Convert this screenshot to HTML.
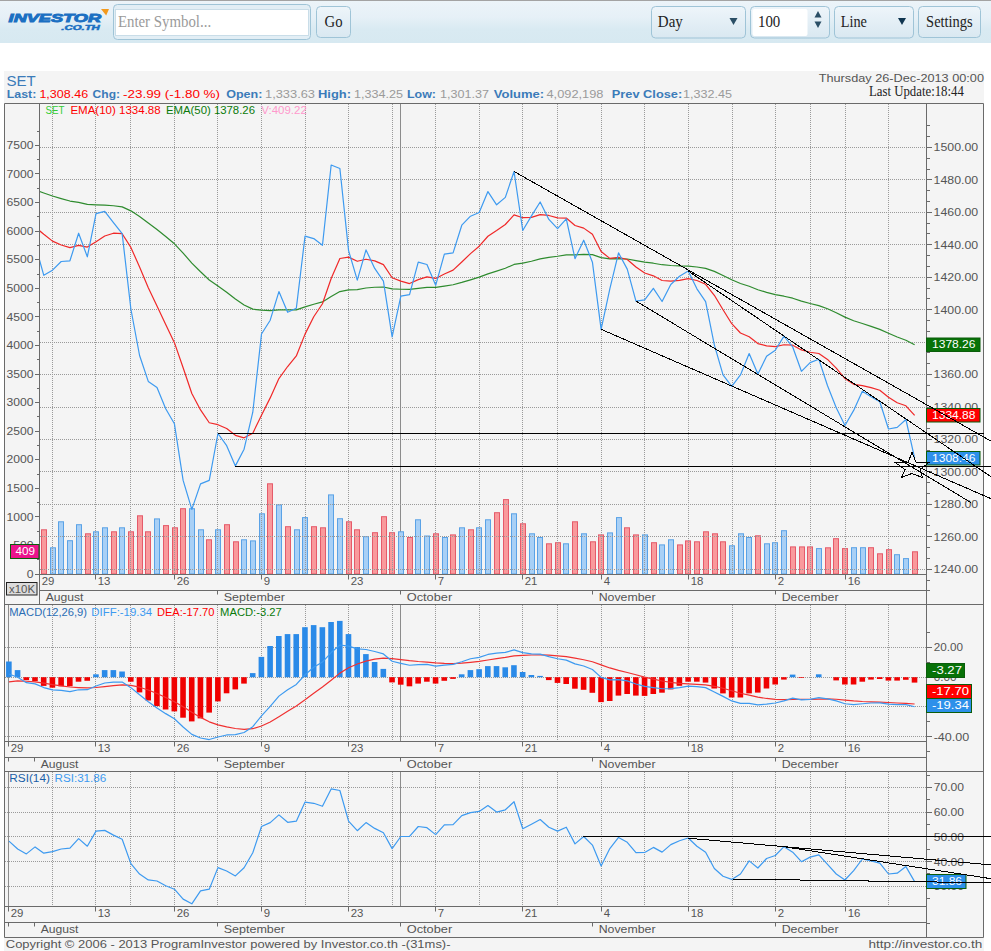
<!DOCTYPE html>
<html><head><meta charset="utf-8"><title>SET Chart</title>
<style>html,body{margin:0;padding:0;background:#fff;overflow:hidden}svg{display:block}</style></head>
<body><svg xmlns="http://www.w3.org/2000/svg" width="991" height="951" viewBox="0 0 991 951" shape-rendering="auto">
<defs><linearGradient id="hdr" x1="0" y1="0" x2="0" y2="1"><stop offset="0" stop-color="#ecf4f9"/><stop offset="0.4" stop-color="#e6f0f7"/><stop offset="0.68" stop-color="#d9eaf2"/><stop offset="1" stop-color="#d7e9f1"/></linearGradient><linearGradient id="btn" x1="0" y1="0" x2="0" y2="1"><stop offset="0" stop-color="#eef5fa"/><stop offset="1" stop-color="#d9e8f1"/></linearGradient><clipPath id="cMain"><rect x="40" y="104" width="886" height="470"/></clipPath><clipPath id="cMacd"><rect x="5" y="605" width="921" height="136"/></clipPath><clipPath id="cRsi"><rect x="5" y="772" width="921" height="134"/></clipPath></defs>
<rect x="0" y="0" width="991" height="43" fill="url(#hdr)" stroke="none" stroke-width="1"/>
<rect x="0" y="0" width="991" height="1" fill="#a3a3a3" stroke="none" stroke-width="1"/>
<text x="8.6" y="21.6" font-size="11.8" fill="#1b6fc2" font-weight="bold" font-family='"Liberation Sans", sans-serif' text-anchor="start" textLength="92.5" lengthAdjust="spacingAndGlyphs" font-style="italic" stroke="#1b6fc2" stroke-width="0.9">INVESTOR</text>
<text x="61.3" y="30" font-size="7.4" fill="#1b6fc2" font-weight="bold" font-family='"Liberation Sans", sans-serif' text-anchor="start" textLength="38.5" lengthAdjust="spacingAndGlyphs" font-style="italic" stroke="#1b6fc2" stroke-width="0.5">.CO.TH</text>
<polygon points="101,8.9 109,8.9 106.2,15.5" fill="#f39a1e"/>
<rect x="113.5" y="4.5" width="197" height="35" fill="#e2eef5" stroke="#9fc4d7" stroke-width="1" rx="4"/>
<rect x="115.5" y="9.5" width="193" height="26" fill="#ffffff" stroke="#c9dde8" stroke-width="1"/>
<text x="117.9" y="26.9" font-size="16" fill="#9a9a9a" font-weight="normal" font-family='"Liberation Serif", serif' text-anchor="start" textLength="93.2" lengthAdjust="spacingAndGlyphs">Enter Symbol...</text>
<rect x="316.5" y="6.5" width="34" height="31" fill="url(#btn)" stroke="#9fc4d7" stroke-width="1" rx="4"/>
<text x="324.6" y="26.9" font-size="16.5" fill="#222" font-weight="normal" font-family='"Liberation Serif", serif' text-anchor="start" textLength="18" lengthAdjust="spacingAndGlyphs">Go</text>
<rect x="651.5" y="6.5" width="94" height="31.5" fill="url(#btn)" stroke="#9fc4d7" stroke-width="1" rx="4"/>
<text x="657.8" y="27.2" font-size="16.5" fill="#222" font-weight="normal" font-family='"Liberation Serif", serif' text-anchor="start" textLength="25" lengthAdjust="spacingAndGlyphs">Day</text>
<polygon points="729.5,18 737.5,18 733.5,25" fill="#2b4f66"/>
<rect x="750.5" y="6.5" width="79" height="31.5" fill="url(#btn)" stroke="#9fc4d7" stroke-width="1" rx="4"/>
<rect x="752.5" y="9" width="55" height="27" fill="#ffffff" stroke="none" stroke-width="1" rx="2"/>
<text x="758" y="27.2" font-size="16.5" fill="#222" font-weight="normal" font-family='"Liberation Serif", serif' text-anchor="start" textLength="22.3" lengthAdjust="spacingAndGlyphs">100</text>
<polygon points="814.5,17.5 821.5,17.5 818,11" fill="#2b4f66"/>
<polygon points="814.5,21.5 821.5,21.5 818,28" fill="#2b4f66"/>
<rect x="834.5" y="6.5" width="79" height="31.5" fill="url(#btn)" stroke="#9fc4d7" stroke-width="1" rx="4"/>
<text x="840.7" y="27" font-size="16.5" fill="#222" font-weight="normal" font-family='"Liberation Serif", serif' text-anchor="start" textLength="26.2" lengthAdjust="spacingAndGlyphs">Line</text>
<polygon points="898,18 906,18 902,25" fill="#0f3550"/>
<rect x="918.5" y="6.5" width="62" height="31" fill="url(#btn)" stroke="#9fc4d7" stroke-width="1" rx="4"/>
<text x="926.1" y="27" font-size="16.5" fill="#222" font-weight="normal" font-family='"Liberation Serif", serif' text-anchor="start" textLength="46.6" lengthAdjust="spacingAndGlyphs">Settings</text>
<rect x="4" y="71" width="980" height="880" fill="#f4f4f4" stroke="none" stroke-width="1"/>
<text x="6.5" y="86.3" font-size="15" fill="#3b7bb9" font-weight="normal" font-family='"Liberation Sans", sans-serif' text-anchor="start" textLength="29.3" lengthAdjust="spacingAndGlyphs">SET</text>
<text x="6.7" y="97.9" font-size="11.2" fill="#3b7bb9" font-weight="bold" font-family='"Liberation Sans", sans-serif' text-anchor="start" textLength="29.6" lengthAdjust="spacingAndGlyphs">Last:</text>
<text x="39.4" y="97.9" font-size="11.2" fill="#ff0000" font-weight="normal" font-family='"Liberation Sans", sans-serif' text-anchor="start" textLength="48.8" lengthAdjust="spacingAndGlyphs">1,308.46</text>
<text x="92.6" y="97.9" font-size="11.2" fill="#3b7bb9" font-weight="bold" font-family='"Liberation Sans", sans-serif' text-anchor="start" textLength="27.4" lengthAdjust="spacingAndGlyphs">Chg:</text>
<text x="123" y="97.9" font-size="11.2" fill="#ff0000" font-weight="normal" font-family='"Liberation Sans", sans-serif' text-anchor="start" textLength="97" lengthAdjust="spacingAndGlyphs">-23.99 (-1.80 %)</text>
<text x="226.2" y="97.9" font-size="11.2" fill="#3b7bb9" font-weight="bold" font-family='"Liberation Sans", sans-serif' text-anchor="start" textLength="36.2" lengthAdjust="spacingAndGlyphs">Open:</text>
<text x="265" y="97.9" font-size="11.2" fill="#9a9a9a" font-weight="normal" font-family='"Liberation Sans", sans-serif' text-anchor="start" textLength="50" lengthAdjust="spacingAndGlyphs">1,333.63</text>
<text x="318" y="97.9" font-size="11.2" fill="#3b7bb9" font-weight="bold" font-family='"Liberation Sans", sans-serif' text-anchor="start" textLength="33" lengthAdjust="spacingAndGlyphs">High:</text>
<text x="354" y="97.9" font-size="11.2" fill="#9a9a9a" font-weight="normal" font-family='"Liberation Sans", sans-serif' text-anchor="start" textLength="49" lengthAdjust="spacingAndGlyphs">1,334.25</text>
<text x="407" y="97.9" font-size="11.2" fill="#3b7bb9" font-weight="bold" font-family='"Liberation Sans", sans-serif' text-anchor="start" textLength="29" lengthAdjust="spacingAndGlyphs">Low:</text>
<text x="440" y="97.9" font-size="11.2" fill="#9a9a9a" font-weight="normal" font-family='"Liberation Sans", sans-serif' text-anchor="start" textLength="49" lengthAdjust="spacingAndGlyphs">1,301.37</text>
<text x="493.8" y="97.9" font-size="11.2" fill="#3b7bb9" font-weight="bold" font-family='"Liberation Sans", sans-serif' text-anchor="start" textLength="50.4" lengthAdjust="spacingAndGlyphs">Volume:</text>
<text x="546.5" y="97.9" font-size="11.2" fill="#9a9a9a" font-weight="normal" font-family='"Liberation Sans", sans-serif' text-anchor="start" textLength="57" lengthAdjust="spacingAndGlyphs">4,092,198</text>
<text x="611.8" y="97.9" font-size="11.2" fill="#3b7bb9" font-weight="bold" font-family='"Liberation Sans", sans-serif' text-anchor="start" textLength="70.4" lengthAdjust="spacingAndGlyphs">Prev Close:</text>
<text x="683" y="97.9" font-size="11.2" fill="#9a9a9a" font-weight="normal" font-family='"Liberation Sans", sans-serif' text-anchor="start" textLength="49" lengthAdjust="spacingAndGlyphs">1,332.45</text>
<text x="818.7" y="82.3" font-size="11.4" fill="#555" font-weight="normal" font-family='"Liberation Sans", sans-serif' text-anchor="start" textLength="165.3" lengthAdjust="spacingAndGlyphs">Thursday 26-Dec-2013 00:00</text>
<text x="869" y="96.2" font-size="14" fill="#222" font-weight="normal" font-family='"Liberation Serif", serif' text-anchor="start" textLength="94.8" lengthAdjust="spacingAndGlyphs">Last Update:18:44</text>
<line x1="40" y1="147.5" x2="926" y2="147.5" stroke="#9a9a9a" stroke-width="1" stroke-dasharray="1 1"/>
<line x1="40" y1="179.5" x2="926" y2="179.5" stroke="#9a9a9a" stroke-width="1" stroke-dasharray="1 1"/>
<line x1="40" y1="212.5" x2="926" y2="212.5" stroke="#9a9a9a" stroke-width="1" stroke-dasharray="1 1"/>
<line x1="40" y1="244.5" x2="926" y2="244.5" stroke="#9a9a9a" stroke-width="1" stroke-dasharray="1 1"/>
<line x1="40" y1="277.5" x2="926" y2="277.5" stroke="#9a9a9a" stroke-width="1" stroke-dasharray="1 1"/>
<line x1="40" y1="309.5" x2="926" y2="309.5" stroke="#9a9a9a" stroke-width="1" stroke-dasharray="1 1"/>
<line x1="40" y1="342.5" x2="926" y2="342.5" stroke="#9a9a9a" stroke-width="1" stroke-dasharray="1 1"/>
<line x1="40" y1="374.5" x2="926" y2="374.5" stroke="#9a9a9a" stroke-width="1" stroke-dasharray="1 1"/>
<line x1="40" y1="407.5" x2="926" y2="407.5" stroke="#9a9a9a" stroke-width="1" stroke-dasharray="1 1"/>
<line x1="40" y1="439.5" x2="926" y2="439.5" stroke="#9a9a9a" stroke-width="1" stroke-dasharray="1 1"/>
<line x1="40" y1="471.5" x2="926" y2="471.5" stroke="#9a9a9a" stroke-width="1" stroke-dasharray="1 1"/>
<line x1="40" y1="504.5" x2="926" y2="504.5" stroke="#9a9a9a" stroke-width="1" stroke-dasharray="1 1"/>
<line x1="40" y1="536.5" x2="926" y2="536.5" stroke="#9a9a9a" stroke-width="1" stroke-dasharray="1 1"/>
<line x1="40" y1="569.5" x2="926" y2="569.5" stroke="#9a9a9a" stroke-width="1" stroke-dasharray="1 1"/>
<line x1="52.5" y1="104" x2="52.5" y2="574" stroke="#9a9a9a" stroke-width="1" stroke-dasharray="1 1"/>
<line x1="95.5" y1="104" x2="95.5" y2="574" stroke="#9a9a9a" stroke-width="1" stroke-dasharray="1 1"/>
<line x1="130.5" y1="104" x2="130.5" y2="574" stroke="#9a9a9a" stroke-width="1" stroke-dasharray="1 1"/>
<line x1="174.5" y1="104" x2="174.5" y2="574" stroke="#9a9a9a" stroke-width="1" stroke-dasharray="1 1"/>
<line x1="217.5" y1="104" x2="217.5" y2="574" stroke="#9a9a9a" stroke-width="1" stroke-dasharray="1 1"/>
<line x1="261.5" y1="104" x2="261.5" y2="574" stroke="#9a9a9a" stroke-width="1" stroke-dasharray="1 1"/>
<line x1="305.5" y1="104" x2="305.5" y2="574" stroke="#9a9a9a" stroke-width="1" stroke-dasharray="1 1"/>
<line x1="348.5" y1="104" x2="348.5" y2="574" stroke="#9a9a9a" stroke-width="1" stroke-dasharray="1 1"/>
<line x1="392.5" y1="104" x2="392.5" y2="574" stroke="#9a9a9a" stroke-width="1" stroke-dasharray="1 1"/>
<line x1="435.5" y1="104" x2="435.5" y2="574" stroke="#9a9a9a" stroke-width="1" stroke-dasharray="1 1"/>
<line x1="479.5" y1="104" x2="479.5" y2="574" stroke="#9a9a9a" stroke-width="1" stroke-dasharray="1 1"/>
<line x1="522.5" y1="104" x2="522.5" y2="574" stroke="#9a9a9a" stroke-width="1" stroke-dasharray="1 1"/>
<line x1="557.5" y1="104" x2="557.5" y2="574" stroke="#9a9a9a" stroke-width="1" stroke-dasharray="1 1"/>
<line x1="601.5" y1="104" x2="601.5" y2="574" stroke="#9a9a9a" stroke-width="1" stroke-dasharray="1 1"/>
<line x1="644.5" y1="104" x2="644.5" y2="574" stroke="#9a9a9a" stroke-width="1" stroke-dasharray="1 1"/>
<line x1="688.5" y1="104" x2="688.5" y2="574" stroke="#9a9a9a" stroke-width="1" stroke-dasharray="1 1"/>
<line x1="732.5" y1="104" x2="732.5" y2="574" stroke="#9a9a9a" stroke-width="1" stroke-dasharray="1 1"/>
<line x1="775.5" y1="104" x2="775.5" y2="574" stroke="#9a9a9a" stroke-width="1" stroke-dasharray="1 1"/>
<line x1="810.5" y1="104" x2="810.5" y2="574" stroke="#9a9a9a" stroke-width="1" stroke-dasharray="1 1"/>
<line x1="845.5" y1="104" x2="845.5" y2="574" stroke="#9a9a9a" stroke-width="1" stroke-dasharray="1 1"/>
<line x1="888.5" y1="104" x2="888.5" y2="574" stroke="#9a9a9a" stroke-width="1" stroke-dasharray="1 1"/>
<line x1="5" y1="647.5" x2="926" y2="647.5" stroke="#9a9a9a" stroke-width="1" stroke-dasharray="1 1"/>
<line x1="5" y1="677.5" x2="926" y2="677.5" stroke="#9a9a9a" stroke-width="1" stroke-dasharray="1 1"/>
<line x1="5" y1="706.5" x2="926" y2="706.5" stroke="#9a9a9a" stroke-width="1" stroke-dasharray="1 1"/>
<line x1="5" y1="736.5" x2="926" y2="736.5" stroke="#9a9a9a" stroke-width="1" stroke-dasharray="1 1"/>
<line x1="8.5" y1="605" x2="8.5" y2="741" stroke="#9a9a9a" stroke-width="1" stroke-dasharray="1 1"/>
<line x1="52.5" y1="605" x2="52.5" y2="741" stroke="#9a9a9a" stroke-width="1" stroke-dasharray="1 1"/>
<line x1="95.5" y1="605" x2="95.5" y2="741" stroke="#9a9a9a" stroke-width="1" stroke-dasharray="1 1"/>
<line x1="130.5" y1="605" x2="130.5" y2="741" stroke="#9a9a9a" stroke-width="1" stroke-dasharray="1 1"/>
<line x1="174.5" y1="605" x2="174.5" y2="741" stroke="#9a9a9a" stroke-width="1" stroke-dasharray="1 1"/>
<line x1="217.5" y1="605" x2="217.5" y2="741" stroke="#9a9a9a" stroke-width="1" stroke-dasharray="1 1"/>
<line x1="261.5" y1="605" x2="261.5" y2="741" stroke="#9a9a9a" stroke-width="1" stroke-dasharray="1 1"/>
<line x1="305.5" y1="605" x2="305.5" y2="741" stroke="#9a9a9a" stroke-width="1" stroke-dasharray="1 1"/>
<line x1="348.5" y1="605" x2="348.5" y2="741" stroke="#9a9a9a" stroke-width="1" stroke-dasharray="1 1"/>
<line x1="392.5" y1="605" x2="392.5" y2="741" stroke="#9a9a9a" stroke-width="1" stroke-dasharray="1 1"/>
<line x1="435.5" y1="605" x2="435.5" y2="741" stroke="#9a9a9a" stroke-width="1" stroke-dasharray="1 1"/>
<line x1="479.5" y1="605" x2="479.5" y2="741" stroke="#9a9a9a" stroke-width="1" stroke-dasharray="1 1"/>
<line x1="522.5" y1="605" x2="522.5" y2="741" stroke="#9a9a9a" stroke-width="1" stroke-dasharray="1 1"/>
<line x1="557.5" y1="605" x2="557.5" y2="741" stroke="#9a9a9a" stroke-width="1" stroke-dasharray="1 1"/>
<line x1="601.5" y1="605" x2="601.5" y2="741" stroke="#9a9a9a" stroke-width="1" stroke-dasharray="1 1"/>
<line x1="644.5" y1="605" x2="644.5" y2="741" stroke="#9a9a9a" stroke-width="1" stroke-dasharray="1 1"/>
<line x1="688.5" y1="605" x2="688.5" y2="741" stroke="#9a9a9a" stroke-width="1" stroke-dasharray="1 1"/>
<line x1="732.5" y1="605" x2="732.5" y2="741" stroke="#9a9a9a" stroke-width="1" stroke-dasharray="1 1"/>
<line x1="775.5" y1="605" x2="775.5" y2="741" stroke="#9a9a9a" stroke-width="1" stroke-dasharray="1 1"/>
<line x1="810.5" y1="605" x2="810.5" y2="741" stroke="#9a9a9a" stroke-width="1" stroke-dasharray="1 1"/>
<line x1="845.5" y1="605" x2="845.5" y2="741" stroke="#9a9a9a" stroke-width="1" stroke-dasharray="1 1"/>
<line x1="888.5" y1="605" x2="888.5" y2="741" stroke="#9a9a9a" stroke-width="1" stroke-dasharray="1 1"/>
<line x1="5" y1="787.5" x2="926" y2="787.5" stroke="#9a9a9a" stroke-width="1" stroke-dasharray="1 1"/>
<line x1="5" y1="812.5" x2="926" y2="812.5" stroke="#9a9a9a" stroke-width="1" stroke-dasharray="1 1"/>
<line x1="5" y1="836.5" x2="926" y2="836.5" stroke="#9a9a9a" stroke-width="1" stroke-dasharray="1 1"/>
<line x1="5" y1="861.5" x2="926" y2="861.5" stroke="#9a9a9a" stroke-width="1" stroke-dasharray="1 1"/>
<line x1="5" y1="886.5" x2="926" y2="886.5" stroke="#9a9a9a" stroke-width="1" stroke-dasharray="1 1"/>
<line x1="8.5" y1="772" x2="8.5" y2="906" stroke="#9a9a9a" stroke-width="1" stroke-dasharray="1 1"/>
<line x1="52.5" y1="772" x2="52.5" y2="906" stroke="#9a9a9a" stroke-width="1" stroke-dasharray="1 1"/>
<line x1="95.5" y1="772" x2="95.5" y2="906" stroke="#9a9a9a" stroke-width="1" stroke-dasharray="1 1"/>
<line x1="130.5" y1="772" x2="130.5" y2="906" stroke="#9a9a9a" stroke-width="1" stroke-dasharray="1 1"/>
<line x1="174.5" y1="772" x2="174.5" y2="906" stroke="#9a9a9a" stroke-width="1" stroke-dasharray="1 1"/>
<line x1="217.5" y1="772" x2="217.5" y2="906" stroke="#9a9a9a" stroke-width="1" stroke-dasharray="1 1"/>
<line x1="261.5" y1="772" x2="261.5" y2="906" stroke="#9a9a9a" stroke-width="1" stroke-dasharray="1 1"/>
<line x1="305.5" y1="772" x2="305.5" y2="906" stroke="#9a9a9a" stroke-width="1" stroke-dasharray="1 1"/>
<line x1="348.5" y1="772" x2="348.5" y2="906" stroke="#9a9a9a" stroke-width="1" stroke-dasharray="1 1"/>
<line x1="392.5" y1="772" x2="392.5" y2="906" stroke="#9a9a9a" stroke-width="1" stroke-dasharray="1 1"/>
<line x1="435.5" y1="772" x2="435.5" y2="906" stroke="#9a9a9a" stroke-width="1" stroke-dasharray="1 1"/>
<line x1="479.5" y1="772" x2="479.5" y2="906" stroke="#9a9a9a" stroke-width="1" stroke-dasharray="1 1"/>
<line x1="522.5" y1="772" x2="522.5" y2="906" stroke="#9a9a9a" stroke-width="1" stroke-dasharray="1 1"/>
<line x1="557.5" y1="772" x2="557.5" y2="906" stroke="#9a9a9a" stroke-width="1" stroke-dasharray="1 1"/>
<line x1="601.5" y1="772" x2="601.5" y2="906" stroke="#9a9a9a" stroke-width="1" stroke-dasharray="1 1"/>
<line x1="644.5" y1="772" x2="644.5" y2="906" stroke="#9a9a9a" stroke-width="1" stroke-dasharray="1 1"/>
<line x1="688.5" y1="772" x2="688.5" y2="906" stroke="#9a9a9a" stroke-width="1" stroke-dasharray="1 1"/>
<line x1="732.5" y1="772" x2="732.5" y2="906" stroke="#9a9a9a" stroke-width="1" stroke-dasharray="1 1"/>
<line x1="775.5" y1="772" x2="775.5" y2="906" stroke="#9a9a9a" stroke-width="1" stroke-dasharray="1 1"/>
<line x1="810.5" y1="772" x2="810.5" y2="906" stroke="#9a9a9a" stroke-width="1" stroke-dasharray="1 1"/>
<line x1="845.5" y1="772" x2="845.5" y2="906" stroke="#9a9a9a" stroke-width="1" stroke-dasharray="1 1"/>
<line x1="888.5" y1="772" x2="888.5" y2="906" stroke="#9a9a9a" stroke-width="1" stroke-dasharray="1 1"/>
<line x1="400.5" y1="104" x2="400.5" y2="574" stroke="#8c8c8c" stroke-width="1"/>
<line x1="400.5" y1="605" x2="400.5" y2="741" stroke="#8c8c8c" stroke-width="1"/>
<line x1="400.5" y1="772" x2="400.5" y2="906" stroke="#8c8c8c" stroke-width="1"/>
<line x1="8.5" y1="605" x2="8.5" y2="741" stroke="#8c8c8c" stroke-width="1"/>
<line x1="8.5" y1="772" x2="8.5" y2="906" stroke="#8c8c8c" stroke-width="1"/>
<rect x="41.5" y="529.8" width="5" height="44.2" fill="#f99a9c" stroke="#e55a6a" stroke-width="1"/>
<rect x="50.5" y="547.8" width="5" height="26.2" fill="#a8d0f6" stroke="#5aa2e6" stroke-width="1"/>
<rect x="58.5" y="521.8" width="5" height="52.2" fill="#a8d0f6" stroke="#5aa2e6" stroke-width="1"/>
<rect x="67.5" y="540.7" width="5" height="33.3" fill="#a8d0f6" stroke="#5aa2e6" stroke-width="1"/>
<rect x="76.5" y="524.7" width="5" height="49.3" fill="#a8d0f6" stroke="#5aa2e6" stroke-width="1"/>
<rect x="85.5" y="533.8" width="5" height="40.2" fill="#f99a9c" stroke="#e55a6a" stroke-width="1"/>
<rect x="93.5" y="531.8" width="5" height="42.2" fill="#a8d0f6" stroke="#5aa2e6" stroke-width="1"/>
<rect x="102.5" y="527.8" width="5" height="46.2" fill="#a8d0f6" stroke="#5aa2e6" stroke-width="1"/>
<rect x="111.5" y="531.8" width="5" height="42.2" fill="#f99a9c" stroke="#e55a6a" stroke-width="1"/>
<rect x="119.5" y="527.8" width="5" height="46.2" fill="#a8d0f6" stroke="#5aa2e6" stroke-width="1"/>
<rect x="128.5" y="531.8" width="5" height="42.2" fill="#f99a9c" stroke="#e55a6a" stroke-width="1"/>
<rect x="137.5" y="515.8" width="5" height="58.2" fill="#f99a9c" stroke="#e55a6a" stroke-width="1"/>
<rect x="145.5" y="531.8" width="5" height="42.2" fill="#f99a9c" stroke="#e55a6a" stroke-width="1"/>
<rect x="154.5" y="518.9" width="5" height="55.1" fill="#a8d0f6" stroke="#5aa2e6" stroke-width="1"/>
<rect x="163.5" y="525.6" width="5" height="48.4" fill="#f99a9c" stroke="#e55a6a" stroke-width="1"/>
<rect x="172.5" y="527.8" width="5" height="46.2" fill="#f99a9c" stroke="#e55a6a" stroke-width="1"/>
<rect x="180.5" y="508.7" width="5" height="65.3" fill="#f99a9c" stroke="#e55a6a" stroke-width="1"/>
<rect x="189.5" y="508.7" width="5" height="65.3" fill="#a8d0f6" stroke="#5aa2e6" stroke-width="1"/>
<rect x="198.5" y="529.8" width="5" height="44.2" fill="#a8d0f6" stroke="#5aa2e6" stroke-width="1"/>
<rect x="206.5" y="539.8" width="5" height="34.2" fill="#f99a9c" stroke="#e55a6a" stroke-width="1"/>
<rect x="215.5" y="529.8" width="5" height="44.2" fill="#a8d0f6" stroke="#5aa2e6" stroke-width="1"/>
<rect x="224.5" y="524.7" width="5" height="49.3" fill="#f99a9c" stroke="#e55a6a" stroke-width="1"/>
<rect x="233.5" y="541.8" width="5" height="32.2" fill="#f99a9c" stroke="#e55a6a" stroke-width="1"/>
<rect x="241.5" y="539.8" width="5" height="34.2" fill="#a8d0f6" stroke="#5aa2e6" stroke-width="1"/>
<rect x="250.5" y="540.9" width="5" height="33.1" fill="#a8d0f6" stroke="#5aa2e6" stroke-width="1"/>
<rect x="259.5" y="513.8" width="5" height="60.2" fill="#a8d0f6" stroke="#5aa2e6" stroke-width="1"/>
<rect x="267.5" y="483.8" width="5" height="90.2" fill="#f99a9c" stroke="#e55a6a" stroke-width="1"/>
<rect x="276.5" y="504.9" width="5" height="69.1" fill="#a8d0f6" stroke="#5aa2e6" stroke-width="1"/>
<rect x="285.5" y="526.7" width="5" height="47.3" fill="#f99a9c" stroke="#e55a6a" stroke-width="1"/>
<rect x="294.5" y="529.8" width="5" height="44.2" fill="#a8d0f6" stroke="#5aa2e6" stroke-width="1"/>
<rect x="302.5" y="517.6" width="5" height="56.4" fill="#a8d0f6" stroke="#5aa2e6" stroke-width="1"/>
<rect x="311.5" y="526.7" width="5" height="47.3" fill="#f99a9c" stroke="#e55a6a" stroke-width="1"/>
<rect x="320.5" y="527.8" width="5" height="46.2" fill="#f99a9c" stroke="#e55a6a" stroke-width="1"/>
<rect x="328.5" y="494.9" width="5" height="79.1" fill="#a8d0f6" stroke="#5aa2e6" stroke-width="1"/>
<rect x="337.5" y="518.7" width="5" height="55.3" fill="#a8d0f6" stroke="#5aa2e6" stroke-width="1"/>
<rect x="346.5" y="521.8" width="5" height="52.2" fill="#f99a9c" stroke="#e55a6a" stroke-width="1"/>
<rect x="354.5" y="529.8" width="5" height="44.2" fill="#f99a9c" stroke="#e55a6a" stroke-width="1"/>
<rect x="363.5" y="536.7" width="5" height="37.3" fill="#a8d0f6" stroke="#5aa2e6" stroke-width="1"/>
<rect x="372.5" y="532.7" width="5" height="41.3" fill="#f99a9c" stroke="#e55a6a" stroke-width="1"/>
<rect x="381.5" y="516.7" width="5" height="57.3" fill="#f99a9c" stroke="#e55a6a" stroke-width="1"/>
<rect x="389.5" y="532.7" width="5" height="41.3" fill="#f99a9c" stroke="#e55a6a" stroke-width="1"/>
<rect x="398.5" y="531.8" width="5" height="42.2" fill="#a8d0f6" stroke="#5aa2e6" stroke-width="1"/>
<rect x="407.5" y="537.5" width="5" height="36.5" fill="#f99a9c" stroke="#e55a6a" stroke-width="1"/>
<rect x="415.5" y="519.8" width="5" height="54.2" fill="#a8d0f6" stroke="#5aa2e6" stroke-width="1"/>
<rect x="424.5" y="536" width="5" height="38" fill="#a8d0f6" stroke="#5aa2e6" stroke-width="1"/>
<rect x="433.5" y="533.8" width="5" height="40.2" fill="#f99a9c" stroke="#e55a6a" stroke-width="1"/>
<rect x="442.5" y="537.5" width="5" height="36.5" fill="#a8d0f6" stroke="#5aa2e6" stroke-width="1"/>
<rect x="450.5" y="534.9" width="5" height="39.1" fill="#f99a9c" stroke="#e55a6a" stroke-width="1"/>
<rect x="459.5" y="527.8" width="5" height="46.2" fill="#a8d0f6" stroke="#5aa2e6" stroke-width="1"/>
<rect x="468.5" y="529.8" width="5" height="44.2" fill="#f99a9c" stroke="#e55a6a" stroke-width="1"/>
<rect x="476.5" y="527.8" width="5" height="46.2" fill="#a8d0f6" stroke="#5aa2e6" stroke-width="1"/>
<rect x="485.5" y="519.8" width="5" height="54.2" fill="#a8d0f6" stroke="#5aa2e6" stroke-width="1"/>
<rect x="494.5" y="512.7" width="5" height="61.3" fill="#f99a9c" stroke="#e55a6a" stroke-width="1"/>
<rect x="503.5" y="499.6" width="5" height="74.4" fill="#f99a9c" stroke="#e55a6a" stroke-width="1"/>
<rect x="511.5" y="513.8" width="5" height="60.2" fill="#a8d0f6" stroke="#5aa2e6" stroke-width="1"/>
<rect x="520.5" y="523.8" width="5" height="50.2" fill="#f99a9c" stroke="#e55a6a" stroke-width="1"/>
<rect x="529.5" y="533.8" width="5" height="40.2" fill="#a8d0f6" stroke="#5aa2e6" stroke-width="1"/>
<rect x="537.5" y="537.5" width="5" height="36.5" fill="#a8d0f6" stroke="#5aa2e6" stroke-width="1"/>
<rect x="546.5" y="543.8" width="5" height="30.2" fill="#f99a9c" stroke="#e55a6a" stroke-width="1"/>
<rect x="555.5" y="542.7" width="5" height="31.3" fill="#f99a9c" stroke="#e55a6a" stroke-width="1"/>
<rect x="563.5" y="543.8" width="5" height="30.2" fill="#a8d0f6" stroke="#5aa2e6" stroke-width="1"/>
<rect x="572.5" y="521.8" width="5" height="52.2" fill="#f99a9c" stroke="#e55a6a" stroke-width="1"/>
<rect x="581.5" y="533.8" width="5" height="40.2" fill="#a8d0f6" stroke="#5aa2e6" stroke-width="1"/>
<rect x="590.5" y="541.8" width="5" height="32.2" fill="#f99a9c" stroke="#e55a6a" stroke-width="1"/>
<rect x="598.5" y="534.9" width="5" height="39.1" fill="#f99a9c" stroke="#e55a6a" stroke-width="1"/>
<rect x="607.5" y="532.9" width="5" height="41.1" fill="#a8d0f6" stroke="#5aa2e6" stroke-width="1"/>
<rect x="616.5" y="517.6" width="5" height="56.4" fill="#a8d0f6" stroke="#5aa2e6" stroke-width="1"/>
<rect x="624.5" y="527.8" width="5" height="46.2" fill="#f99a9c" stroke="#e55a6a" stroke-width="1"/>
<rect x="633.5" y="534.9" width="5" height="39.1" fill="#f99a9c" stroke="#e55a6a" stroke-width="1"/>
<rect x="642.5" y="534.9" width="5" height="39.1" fill="#a8d0f6" stroke="#5aa2e6" stroke-width="1"/>
<rect x="651.5" y="542.7" width="5" height="31.3" fill="#f99a9c" stroke="#e55a6a" stroke-width="1"/>
<rect x="659.5" y="544.9" width="5" height="29.1" fill="#a8d0f6" stroke="#5aa2e6" stroke-width="1"/>
<rect x="668.5" y="539.8" width="5" height="34.2" fill="#a8d0f6" stroke="#5aa2e6" stroke-width="1"/>
<rect x="677.5" y="544.9" width="5" height="29.1" fill="#f99a9c" stroke="#e55a6a" stroke-width="1"/>
<rect x="685.5" y="540.9" width="5" height="33.1" fill="#f99a9c" stroke="#e55a6a" stroke-width="1"/>
<rect x="694.5" y="541.8" width="5" height="32.2" fill="#f99a9c" stroke="#e55a6a" stroke-width="1"/>
<rect x="703.5" y="531.8" width="5" height="42.2" fill="#f99a9c" stroke="#e55a6a" stroke-width="1"/>
<rect x="712.5" y="533.8" width="5" height="40.2" fill="#f99a9c" stroke="#e55a6a" stroke-width="1"/>
<rect x="720.5" y="541.8" width="5" height="32.2" fill="#f99a9c" stroke="#e55a6a" stroke-width="1"/>
<rect x="729.5" y="545.8" width="5" height="28.2" fill="#a8d0f6" stroke="#5aa2e6" stroke-width="1"/>
<rect x="738.5" y="533.8" width="5" height="40.2" fill="#a8d0f6" stroke="#5aa2e6" stroke-width="1"/>
<rect x="746.5" y="537.5" width="5" height="36.5" fill="#a8d0f6" stroke="#5aa2e6" stroke-width="1"/>
<rect x="755.5" y="535.8" width="5" height="38.2" fill="#f99a9c" stroke="#e55a6a" stroke-width="1"/>
<rect x="764.5" y="543.8" width="5" height="30.2" fill="#a8d0f6" stroke="#5aa2e6" stroke-width="1"/>
<rect x="772.5" y="542.7" width="5" height="31.3" fill="#a8d0f6" stroke="#5aa2e6" stroke-width="1"/>
<rect x="781.5" y="530.7" width="5" height="43.3" fill="#a8d0f6" stroke="#5aa2e6" stroke-width="1"/>
<rect x="790.5" y="546.9" width="5" height="27.1" fill="#f99a9c" stroke="#e55a6a" stroke-width="1"/>
<rect x="799.5" y="546.9" width="5" height="27.1" fill="#f99a9c" stroke="#e55a6a" stroke-width="1"/>
<rect x="807.5" y="546.9" width="5" height="27.1" fill="#f99a9c" stroke="#e55a6a" stroke-width="1"/>
<rect x="816.5" y="548.6" width="5" height="25.4" fill="#a8d0f6" stroke="#5aa2e6" stroke-width="1"/>
<rect x="825.5" y="547.8" width="5" height="26.2" fill="#f99a9c" stroke="#e55a6a" stroke-width="1"/>
<rect x="833.5" y="538.7" width="5" height="35.3" fill="#f99a9c" stroke="#e55a6a" stroke-width="1"/>
<rect x="842.5" y="548.6" width="5" height="25.4" fill="#f99a9c" stroke="#e55a6a" stroke-width="1"/>
<rect x="851.5" y="547.7" width="5" height="26.3" fill="#a8d0f6" stroke="#5aa2e6" stroke-width="1"/>
<rect x="860.5" y="547.7" width="5" height="26.3" fill="#a8d0f6" stroke="#5aa2e6" stroke-width="1"/>
<rect x="868.5" y="547.7" width="5" height="26.3" fill="#f99a9c" stroke="#e55a6a" stroke-width="1"/>
<rect x="877.5" y="553.8" width="5" height="20.2" fill="#f99a9c" stroke="#e55a6a" stroke-width="1"/>
<rect x="886.5" y="549.7" width="5" height="24.3" fill="#f99a9c" stroke="#e55a6a" stroke-width="1"/>
<rect x="894.5" y="554.7" width="5" height="19.3" fill="#a8d0f6" stroke="#5aa2e6" stroke-width="1"/>
<rect x="903.5" y="558.6" width="5" height="15.4" fill="#a8d0f6" stroke="#5aa2e6" stroke-width="1"/>
<rect x="912.5" y="551.8" width="5" height="22.2" fill="#f99a9c" stroke="#e55a6a" stroke-width="1"/>
<line x1="40" y1="504.5" x2="926" y2="504.5" stroke="#9a9a9a" stroke-width="1" stroke-dasharray="1 1"/>
<line x1="40" y1="536.5" x2="926" y2="536.5" stroke="#9a9a9a" stroke-width="1" stroke-dasharray="1 1"/>
<line x1="40" y1="569.5" x2="926" y2="569.5" stroke="#9a9a9a" stroke-width="1" stroke-dasharray="1 1"/>
<line x1="52.5" y1="480" x2="52.5" y2="574" stroke="#9a9a9a" stroke-width="1" stroke-dasharray="1 1"/>
<line x1="95.5" y1="480" x2="95.5" y2="574" stroke="#9a9a9a" stroke-width="1" stroke-dasharray="1 1"/>
<line x1="130.5" y1="480" x2="130.5" y2="574" stroke="#9a9a9a" stroke-width="1" stroke-dasharray="1 1"/>
<line x1="174.5" y1="480" x2="174.5" y2="574" stroke="#9a9a9a" stroke-width="1" stroke-dasharray="1 1"/>
<line x1="217.5" y1="480" x2="217.5" y2="574" stroke="#9a9a9a" stroke-width="1" stroke-dasharray="1 1"/>
<line x1="261.5" y1="480" x2="261.5" y2="574" stroke="#9a9a9a" stroke-width="1" stroke-dasharray="1 1"/>
<line x1="305.5" y1="480" x2="305.5" y2="574" stroke="#9a9a9a" stroke-width="1" stroke-dasharray="1 1"/>
<line x1="348.5" y1="480" x2="348.5" y2="574" stroke="#9a9a9a" stroke-width="1" stroke-dasharray="1 1"/>
<line x1="392.5" y1="480" x2="392.5" y2="574" stroke="#9a9a9a" stroke-width="1" stroke-dasharray="1 1"/>
<line x1="435.5" y1="480" x2="435.5" y2="574" stroke="#9a9a9a" stroke-width="1" stroke-dasharray="1 1"/>
<line x1="479.5" y1="480" x2="479.5" y2="574" stroke="#9a9a9a" stroke-width="1" stroke-dasharray="1 1"/>
<line x1="522.5" y1="480" x2="522.5" y2="574" stroke="#9a9a9a" stroke-width="1" stroke-dasharray="1 1"/>
<line x1="557.5" y1="480" x2="557.5" y2="574" stroke="#9a9a9a" stroke-width="1" stroke-dasharray="1 1"/>
<line x1="601.5" y1="480" x2="601.5" y2="574" stroke="#9a9a9a" stroke-width="1" stroke-dasharray="1 1"/>
<line x1="644.5" y1="480" x2="644.5" y2="574" stroke="#9a9a9a" stroke-width="1" stroke-dasharray="1 1"/>
<line x1="688.5" y1="480" x2="688.5" y2="574" stroke="#9a9a9a" stroke-width="1" stroke-dasharray="1 1"/>
<line x1="732.5" y1="480" x2="732.5" y2="574" stroke="#9a9a9a" stroke-width="1" stroke-dasharray="1 1"/>
<line x1="775.5" y1="480" x2="775.5" y2="574" stroke="#9a9a9a" stroke-width="1" stroke-dasharray="1 1"/>
<line x1="810.5" y1="480" x2="810.5" y2="574" stroke="#9a9a9a" stroke-width="1" stroke-dasharray="1 1"/>
<line x1="845.5" y1="480" x2="845.5" y2="574" stroke="#9a9a9a" stroke-width="1" stroke-dasharray="1 1"/>
<line x1="888.5" y1="480" x2="888.5" y2="574" stroke="#9a9a9a" stroke-width="1" stroke-dasharray="1 1"/>
<g clip-path="url(#cMain)">
<polyline points="35.08,190.11 43.79,193 52.5,196.03 61.21,198.6 69.92,201.04 78.63,202.3 87.33,204.44 96.04,204.8 104.75,205.05 113.46,205.74 122.17,206.84 130.88,210.84 139.58,216.51 148.29,222.98 157,229.43 165.71,236.46 174.42,243.81 183.13,253.08 191.83,263.14 200.54,271.79 209.25,279.97 217.96,285.99 226.67,292.26 235.38,299.07 244.08,304.95 252.79,309.16 261.5,310.13 270.21,310.53 278.92,309.79 287.63,309.89 296.33,309.82 305.04,306.93 313.75,304.25 322.46,301.94 331.17,296.57 339.88,291.55 348.58,289.94 357.29,289.56 366,288 374.71,287.24 383.42,287 392.13,288.96 400.83,289.24 409.54,289.45 418.25,288.38 426.96,287.45 435.67,287.36 444.37,286.06 453.08,284.76 461.79,282.42 470.5,279.82 479.21,277.18 487.92,273.83 496.62,271.12 505.33,268.23 514.04,264.44 522.75,263.11 531.46,261.25 540.17,258.93 548.87,257.38 557.58,256.26 566.29,254.79 575,254.94 583.71,254.37 592.42,254.67 601.12,257.6 609.83,258.82 618.54,258.59 627.25,259 635.96,260.65 644.67,262.19 653.37,263.22 662.08,264.72 670.79,265.49 679.5,265.92 688.21,266.12 696.92,267.01 705.62,268.36 714.33,271.36 723.04,275.42 731.75,279.77 740.46,283.5 749.17,286.25 757.87,289.7 766.58,292.31 775.29,294.58 784,296.21 792.71,298.2 801.42,301.07 810.12,303.48 818.83,305.67 827.54,308.81 836.25,312.69 844.96,317.12 853.67,320.77 862.37,323.54 871.08,326.41 879.79,329.36 888.5,333.27 897.21,336.96 905.91,340.2 914.62,344.83" fill="none" stroke="#2e8b2e" stroke-width="1.2" stroke-linejoin="round"/>
<polyline points="35.08,227 43.79,234.3 52.5,241.1 61.21,245 69.92,247.6 78.63,245.3 87.33,247.1 96.04,241.8 104.75,236 113.46,233.2 122.17,233.7 130.88,247.39 139.58,267.05 148.29,287.84 157,305.94 165.71,324.62 174.42,342.66 183.13,367.7 191.83,393.46 200.54,409.91 209.25,422.72 217.96,424.68 226.67,428.5 235.38,435.3 244.08,437.83 252.79,433.17 261.5,415.14 270.21,397.88 278.92,378.55 287.63,366.51 296.33,355.92 305.04,334.14 313.75,316.77 322.46,303.77 331.17,278.54 339.88,258.53 348.58,257.09 357.29,261.29 366,259.22 374.71,260.89 383.42,264.58 392.13,277.73 400.83,281.09 409.54,283.55 418.25,279.66 426.96,276.91 435.67,278.43 444.37,274.01 453.08,270.17 461.79,261.99 470.5,253.67 479.21,246.18 487.92,236.26 496.62,230.54 505.33,224.51 514.04,214.87 522.75,217.72 531.46,217.39 540.17,214.59 548.87,215.46 557.58,217.87 566.29,218.06 575,225.45 583.71,228.13 592.42,234.32 601.12,251.59 609.83,258.36 618.54,257.37 627.25,259.5 635.96,267.06 644.67,273.03 653.37,275.81 662.08,280.48 670.79,281.21 679.5,280.32 688.21,278.62 696.92,280.47 705.62,284.32 714.33,295.31 723.04,309.78 731.75,323.71 740.46,333.02 749.17,336.76 757.87,343.55 766.58,345.87 775.29,346.67 784,344.75 792.71,345.16 801.42,349.91 810.12,352.22 818.83,353.51 827.54,359.38 836.25,368.16 844.96,378.59 853.67,384.37 862.37,385.63 871.08,387.66 879.79,390.21 888.5,397.27 897.21,402.75 905.91,405.79 914.62,415.32" fill="none" stroke="#f02828" stroke-width="1.2" stroke-linejoin="round"/>
<polyline points="35.08,244.3 43.79,275.3 52.5,270.2 61.21,261.5 69.92,260.8 78.63,233.2 87.33,256.8 96.04,213.6 104.75,211.3 113.46,222.6 122.17,233.7 130.88,309 139.58,355.5 148.29,381.4 157,387.4 165.71,408.7 174.42,423.8 183.13,480.4 191.83,509.4 200.54,483.9 209.25,480.4 217.96,433.5 226.67,445.7 235.38,465.9 244.08,449.2 252.79,412.2 261.5,334 270.21,320.2 278.92,291.6 287.63,312.3 296.33,308.3 305.04,236.1 313.75,238.6 322.46,245.3 331.17,165 339.88,168.5 348.58,250.6 357.29,280.2 366,249.9 374.71,268.4 383.42,281.2 392.13,336.9 400.83,296.2 409.54,294.6 418.25,262.2 426.96,264.5 435.67,285.3 444.37,254.1 453.08,252.9 461.79,225.2 470.5,216.2 479.21,212.5 487.92,191.6 496.62,204.8 505.33,197.4 514.04,171.5 522.75,230.5 531.46,215.9 540.17,202 548.87,219.4 557.58,228.7 566.29,218.9 575,258.7 583.71,240.2 592.42,262.2 601.12,329.3 609.83,288.8 618.54,252.9 627.25,269.1 635.96,301.1 644.67,299.9 653.37,288.3 662.08,301.5 670.79,284.5 679.5,276.3 688.21,271 696.92,288.8 705.62,301.6 714.33,344.8 723.04,374.9 731.75,386.4 740.46,374.9 749.17,353.6 757.87,374.1 766.58,356.3 775.29,350.3 784,336.1 792.71,347 801.42,371.3 810.12,362.6 818.83,359.3 827.54,385.8 836.25,407.7 844.96,425.5 853.67,410.4 862.37,391.3 871.08,396.8 879.79,401.7 888.5,429 897.21,427.4 905.91,419.5 914.62,458.2" fill="none" stroke="#3d9af0" stroke-width="1.2" stroke-linejoin="round"/>
</g>
<rect x="6.06" y="661.5" width="5.6" height="15.7" fill="#2a8ae8"/>
<rect x="14.77" y="670.1" width="5.6" height="7.1" fill="#2a8ae8"/>
<rect x="23.48" y="677.2" width="5.6" height="2.9" fill="#f00000"/>
<rect x="32.18" y="677.2" width="5.6" height="4" fill="#f00000"/>
<rect x="40.89" y="677.2" width="5.6" height="8.7" fill="#f00000"/>
<rect x="49.6" y="677.2" width="5.6" height="10.5" fill="#f00000"/>
<rect x="58.31" y="677.2" width="5.6" height="9.1" fill="#f00000"/>
<rect x="67.02" y="677.2" width="5.6" height="9.1" fill="#f00000"/>
<rect x="75.73" y="677.2" width="5.6" height="4.5" fill="#f00000"/>
<rect x="84.43" y="677.2" width="5.6" height="3.6" fill="#f00000"/>
<rect x="93.14" y="674.3" width="5.6" height="2.9" fill="#2a8ae8"/>
<rect x="101.85" y="670.1" width="5.6" height="7.1" fill="#2a8ae8"/>
<rect x="110.56" y="670.1" width="5.6" height="7.1" fill="#2a8ae8"/>
<rect x="119.27" y="671.5" width="5.6" height="5.7" fill="#2a8ae8"/>
<rect x="127.98" y="677.2" width="5.6" height="4.5" fill="#f00000"/>
<rect x="136.68" y="677.2" width="5.6" height="15.2" fill="#f00000"/>
<rect x="145.39" y="677.2" width="5.6" height="23.3" fill="#f00000"/>
<rect x="154.1" y="677.2" width="5.6" height="28.9" fill="#f00000"/>
<rect x="162.81" y="677.2" width="5.6" height="32.3" fill="#f00000"/>
<rect x="171.52" y="677.2" width="5.6" height="34.2" fill="#f00000"/>
<rect x="180.23" y="677.2" width="5.6" height="40.5" fill="#f00000"/>
<rect x="188.93" y="677.2" width="5.6" height="44.2" fill="#f00000"/>
<rect x="197.64" y="677.2" width="5.6" height="41.2" fill="#f00000"/>
<rect x="206.35" y="677.2" width="5.6" height="35.4" fill="#f00000"/>
<rect x="215.06" y="677.2" width="5.6" height="24.2" fill="#f00000"/>
<rect x="223.77" y="677.2" width="5.6" height="16.1" fill="#f00000"/>
<rect x="232.48" y="677.2" width="5.6" height="12.2" fill="#f00000"/>
<rect x="241.18" y="677.2" width="5.6" height="6.4" fill="#f00000"/>
<rect x="249.89" y="673.1" width="5.6" height="4.1" fill="#2a8ae8"/>
<rect x="258.6" y="656.9" width="5.6" height="20.3" fill="#2a8ae8"/>
<rect x="267.31" y="646" width="5.6" height="31.2" fill="#2a8ae8"/>
<rect x="276.02" y="636" width="5.6" height="41.2" fill="#2a8ae8"/>
<rect x="284.73" y="634.1" width="5.6" height="43.1" fill="#2a8ae8"/>
<rect x="293.43" y="634.1" width="5.6" height="43.1" fill="#2a8ae8"/>
<rect x="302.14" y="627.2" width="5.6" height="50" fill="#2a8ae8"/>
<rect x="310.85" y="625.1" width="5.6" height="52.1" fill="#2a8ae8"/>
<rect x="319.56" y="627.2" width="5.6" height="50" fill="#2a8ae8"/>
<rect x="328.27" y="622" width="5.6" height="55.2" fill="#2a8ae8"/>
<rect x="336.98" y="620.9" width="5.6" height="56.3" fill="#2a8ae8"/>
<rect x="345.68" y="634.1" width="5.6" height="43.1" fill="#2a8ae8"/>
<rect x="354.39" y="647.1" width="5.6" height="30.1" fill="#2a8ae8"/>
<rect x="363.1" y="654.1" width="5.6" height="23.1" fill="#2a8ae8"/>
<rect x="371.81" y="662" width="5.6" height="15.2" fill="#2a8ae8"/>
<rect x="380.52" y="668.9" width="5.6" height="8.3" fill="#2a8ae8"/>
<rect x="389.23" y="677.2" width="5.6" height="5.2" fill="#f00000"/>
<rect x="397.93" y="677.2" width="5.6" height="7.5" fill="#f00000"/>
<rect x="406.64" y="677.2" width="5.6" height="9.1" fill="#f00000"/>
<rect x="415.35" y="677.2" width="5.6" height="6.4" fill="#f00000"/>
<rect x="424.06" y="677.2" width="5.6" height="4.5" fill="#f00000"/>
<rect x="432.77" y="677.2" width="5.6" height="6.4" fill="#f00000"/>
<rect x="441.47" y="677.2" width="5.6" height="3.6" fill="#f00000"/>
<rect x="450.18" y="677.2" width="5.6" height="1.7" fill="#f00000"/>
<rect x="458.89" y="674.3" width="5.6" height="2.9" fill="#2a8ae8"/>
<rect x="467.6" y="670.1" width="5.6" height="7.1" fill="#2a8ae8"/>
<rect x="476.31" y="669.2" width="5.6" height="8" fill="#2a8ae8"/>
<rect x="485.02" y="666.1" width="5.6" height="11.1" fill="#2a8ae8"/>
<rect x="493.72" y="666.1" width="5.6" height="11.1" fill="#2a8ae8"/>
<rect x="502.43" y="667.3" width="5.6" height="9.9" fill="#2a8ae8"/>
<rect x="511.14" y="665.2" width="5.6" height="12" fill="#2a8ae8"/>
<rect x="519.85" y="672" width="5.6" height="5.2" fill="#2a8ae8"/>
<rect x="528.56" y="675" width="5.6" height="2.2" fill="#2a8ae8"/>
<rect x="537.27" y="675.9" width="5.6" height="1.3" fill="#2a8ae8"/>
<rect x="545.97" y="677.2" width="5.6" height="2.9" fill="#f00000"/>
<rect x="554.68" y="677.2" width="5.6" height="5.7" fill="#f00000"/>
<rect x="563.39" y="677.2" width="5.6" height="6.8" fill="#f00000"/>
<rect x="572.1" y="677.2" width="5.6" height="11.5" fill="#f00000"/>
<rect x="580.81" y="677.2" width="5.6" height="12.6" fill="#f00000"/>
<rect x="589.52" y="677.2" width="5.6" height="15.6" fill="#f00000"/>
<rect x="598.22" y="677.2" width="5.6" height="24.9" fill="#f00000"/>
<rect x="606.93" y="677.2" width="5.6" height="23.8" fill="#f00000"/>
<rect x="615.64" y="677.2" width="5.6" height="18.4" fill="#f00000"/>
<rect x="624.35" y="677.2" width="5.6" height="16.8" fill="#f00000"/>
<rect x="633.06" y="677.2" width="5.6" height="18.4" fill="#f00000"/>
<rect x="641.77" y="677.2" width="5.6" height="18.7" fill="#f00000"/>
<rect x="650.47" y="677.2" width="5.6" height="16.8" fill="#f00000"/>
<rect x="659.18" y="677.2" width="5.6" height="15.5" fill="#f00000"/>
<rect x="667.89" y="677.2" width="5.6" height="12.2" fill="#f00000"/>
<rect x="676.6" y="677.2" width="5.6" height="8.6" fill="#f00000"/>
<rect x="685.31" y="677.2" width="5.6" height="4.5" fill="#f00000"/>
<rect x="694.02" y="677.2" width="5.6" height="4.5" fill="#f00000"/>
<rect x="702.72" y="677.2" width="5.6" height="5.4" fill="#f00000"/>
<rect x="711.43" y="677.2" width="5.6" height="11.3" fill="#f00000"/>
<rect x="720.14" y="677.2" width="5.6" height="16.2" fill="#f00000"/>
<rect x="728.85" y="677.2" width="5.6" height="20.3" fill="#f00000"/>
<rect x="737.56" y="677.2" width="5.6" height="20.3" fill="#f00000"/>
<rect x="746.27" y="677.2" width="5.6" height="16.2" fill="#f00000"/>
<rect x="754.97" y="677.2" width="5.6" height="15.4" fill="#f00000"/>
<rect x="763.68" y="677.2" width="5.6" height="11.3" fill="#f00000"/>
<rect x="772.39" y="677.2" width="5.6" height="7.3" fill="#f00000"/>
<rect x="781.1" y="677.2" width="5.6" height="2.4" fill="#f00000"/>
<rect x="789.81" y="674.6" width="5.6" height="2.6" fill="#2a8ae8"/>
<rect x="798.52" y="677.2" width="5.6" height="0.7" fill="#f00000"/>
<rect x="815.93" y="674.3" width="5.6" height="2.9" fill="#2a8ae8"/>
<rect x="833.35" y="677.2" width="5.6" height="3.2" fill="#f00000"/>
<rect x="842.06" y="677.2" width="5.6" height="7.3" fill="#f00000"/>
<rect x="850.77" y="677.2" width="5.6" height="7.3" fill="#f00000"/>
<rect x="859.47" y="677.2" width="5.6" height="4.5" fill="#f00000"/>
<rect x="868.18" y="677.2" width="5.6" height="2.4" fill="#f00000"/>
<rect x="876.89" y="677.2" width="5.6" height="1.8" fill="#f00000"/>
<rect x="885.6" y="677.2" width="5.6" height="3.4" fill="#f00000"/>
<rect x="894.31" y="677.2" width="5.6" height="3.4" fill="#f00000"/>
<rect x="903.01" y="677.2" width="5.6" height="2.6" fill="#f00000"/>
<rect x="911.72" y="677.2" width="5.6" height="5.4" fill="#f00000"/>
<g clip-path="url(#cMacd)">
<polyline points="8.96,681.8 17.67,680.85 26.38,681.24 35.08,681.9 43.79,683.21 52.5,684.68 61.21,685.88 69.92,687.01 78.63,687.53 87.33,687.89 96.04,687.5 104.75,686.57 113.46,685.64 122.17,684.89 130.88,685.38 139.58,687.21 148.29,690.03 157,693.55 165.71,697.49 174.42,701.71 183.13,706.76 191.83,712.26 200.54,717.4 209.25,721.84 217.96,724.88 226.67,726.91 235.38,728.5 244.08,729.31 252.79,728.71 261.5,725.99 270.21,721.96 278.92,716.74 287.63,711.33 296.33,705.96 305.04,699.77 313.75,693.27 322.46,687.05 331.17,680.16 339.88,673.13 348.58,667.74 357.29,663.98 366,661.07 374.71,659.13 383.42,658.07 392.13,658.67 400.83,659.57 409.54,660.71 418.25,661.52 426.96,662.09 435.67,662.92 444.37,663.39 453.08,663.58 461.79,663.2 470.5,662.32 479.21,661.36 487.92,660 496.62,658.63 505.33,657.4 514.04,655.92 522.75,655.29 531.46,655.02 540.17,654.83 548.87,655.17 557.58,655.87 566.29,656.71 575,658.14 583.71,659.72 592.42,661.72 601.12,664.89 609.83,667.95 618.54,670.35 627.25,672.48 635.96,674.78 644.67,677.09 653.37,679.13 662.08,680.98 670.79,682.43 679.5,683.41 688.21,683.89 696.92,684.36 705.62,684.95 714.33,686.29 723.04,688.28 731.75,690.77 740.46,693.24 749.17,695.2 757.87,697.09 766.58,698.47 775.29,699.37 784,699.68 792.71,699.36 801.42,699.45 810.12,699.42 818.83,699.03 827.54,698.96 836.25,699.26 844.96,700.1 853.67,700.97 862.37,701.51 871.08,701.81 879.79,702.06 888.5,702.51 897.21,702.98 905.91,703.33 914.62,704.02" fill="none" stroke="#f03030" stroke-width="1.2" stroke-linejoin="round"/>
<polyline points="8.96,673.95 17.67,677.3 26.38,682.69 35.08,683.9 43.79,687.56 52.5,689.93 61.21,690.43 69.92,691.56 78.63,689.78 87.33,689.69 96.04,686.05 104.75,683.02 113.46,682.09 122.17,682.04 130.88,687.63 139.58,694.81 148.29,701.68 157,708 165.71,713.64 174.42,718.81 183.13,727.01 191.83,734.36 200.54,738 209.25,739.54 217.96,736.98 226.67,734.96 235.38,734.6 244.08,732.51 252.79,726.66 261.5,715.84 270.21,706.36 278.92,696.14 287.63,689.78 296.33,684.41 305.04,674.77 313.75,667.22 322.46,662.05 331.17,652.56 339.88,644.98 348.58,646.19 357.29,648.93 366,649.52 374.71,651.53 383.42,653.92 392.13,661.27 400.83,663.32 409.54,665.26 418.25,664.72 426.96,664.34 435.67,666.12 444.37,665.19 453.08,664.43 461.79,661.75 470.5,658.77 479.21,657.36 487.92,654.45 496.62,653.08 505.33,652.45 514.04,649.92 522.75,652.69 531.46,653.92 540.17,654.18 548.87,656.62 557.58,658.72 566.29,660.11 575,663.89 583.71,666.02 592.42,669.52 601.12,677.34 609.83,679.85 618.54,679.55 627.25,680.88 635.96,683.98 644.67,686.44 653.37,687.53 662.08,688.73 670.79,688.53 679.5,687.71 688.21,686.14 696.92,686.61 705.62,687.65 714.33,691.94 723.04,696.38 731.75,700.92 740.46,703.39 749.17,703.3 757.87,704.79 766.58,704.12 775.29,703.02 784,700.88 792.71,698.06 801.42,699.8 810.12,699.42 818.83,697.58 827.54,698.96 836.25,700.86 844.96,703.75 853.67,704.62 862.37,703.76 871.08,703.01 879.79,702.96 888.5,704.21 897.21,704.68 905.91,704.63 914.62,706.72" fill="none" stroke="#3d9af0" stroke-width="1.2" stroke-linejoin="round"/>
</g>
<g clip-path="url(#cRsi)">
<polyline points="8.96,841.1 17.67,849 26.38,853.9 35.08,846.9 43.79,853.2 52.5,851.6 61.21,849 69.92,848.1 78.63,838.6 87.33,846.2 96.04,831.1 104.75,830.4 113.46,835.1 122.17,839.3 130.88,863.6 139.58,874.1 148.29,879.9 157,881 165.71,885.7 174.42,889.2 183.13,899.1 191.83,903.8 200.54,890.8 209.25,889.2 217.96,867.6 226.67,871 235.38,875.9 244.08,867.8 252.79,852.7 261.5,826.5 270.21,822.6 278.92,814.9 287.63,822.3 296.33,821.2 305.04,802.1 313.75,803.3 322.46,806.3 331.17,788.9 339.88,790.5 348.58,821.2 357.29,830.7 366,822.6 374.71,828.4 383.42,832.8 392.13,848.6 400.83,836.5 409.54,836.3 418.25,826.5 426.96,827.7 435.67,834.6 444.37,824.9 453.08,824.6 461.79,815.6 470.5,812.6 479.21,811.4 487.92,805.6 496.62,812.1 505.33,809.8 514.04,801.7 522.75,828.8 531.46,824.2 540.17,819.5 548.87,827.2 557.58,831.1 566.29,827.2 575,843.9 583.71,836.5 592.42,845.1 601.12,866 609.83,848.6 618.54,837.4 627.25,842.3 635.96,852.7 644.67,852.5 653.37,847.4 662.08,852.1 670.79,844.6 679.5,840.7 688.21,838 696.92,846.2 705.62,852.2 714.33,868.5 723.04,876.2 731.75,879.4 740.46,874 749.17,860.9 757.87,868 766.58,858.5 775.29,855.5 784,846.7 792.71,852.2 801.42,861.7 810.12,857.1 818.83,854.9 827.54,864.4 836.25,874 844.96,880 853.67,870.7 862.37,859 871.08,860.9 879.79,863.1 888.5,874 897.21,873.2 905.91,866.6 914.62,881.6" fill="none" stroke="#3d9af0" stroke-width="1.2" stroke-linejoin="round"/>
</g>
<line x1="4.5" y1="103.5" x2="983.5" y2="103.5" stroke="#6a6a6a" stroke-width="1"/>
<line x1="4.5" y1="103.5" x2="4.5" y2="937.5" stroke="#6a6a6a" stroke-width="1"/>
<line x1="983.5" y1="103.5" x2="983.5" y2="937.5" stroke="#6a6a6a" stroke-width="1"/>
<line x1="4.5" y1="937.5" x2="983.5" y2="937.5" stroke="#6a6a6a" stroke-width="1"/>
<line x1="926.5" y1="103.5" x2="926.5" y2="937.5" stroke="#6a6a6a" stroke-width="1"/>
<line x1="39.5" y1="103.5" x2="39.5" y2="604.5" stroke="#6a6a6a" stroke-width="1"/>
<line x1="39.5" y1="574.5" x2="926.5" y2="574.5" stroke="#6a6a6a" stroke-width="1"/>
<line x1="39.5" y1="590.5" x2="926.5" y2="590.5" stroke="#6a6a6a" stroke-width="1"/>
<line x1="4.5" y1="604.5" x2="983.5" y2="604.5" stroke="#6a6a6a" stroke-width="1"/>
<line x1="4.5" y1="741.5" x2="926.5" y2="741.5" stroke="#6a6a6a" stroke-width="1"/>
<line x1="4.5" y1="757.5" x2="926.5" y2="757.5" stroke="#6a6a6a" stroke-width="1"/>
<line x1="4.5" y1="771.5" x2="983.5" y2="771.5" stroke="#6a6a6a" stroke-width="1"/>
<line x1="4.5" y1="906.5" x2="926.5" y2="906.5" stroke="#6a6a6a" stroke-width="1"/>
<line x1="4.5" y1="922.5" x2="926.5" y2="922.5" stroke="#6a6a6a" stroke-width="1"/>
<text x="41.7" y="584.7" font-size="10.6" fill="#555" font-weight="normal" font-family='"Liberation Sans", sans-serif' text-anchor="start" textLength="12.7" lengthAdjust="spacingAndGlyphs">29</text>
<line x1="95.5" y1="574.5" x2="95.5" y2="579.5" stroke="#6a6a6a" stroke-width="1"/>
<line x1="95.5" y1="590.5" x2="95.5" y2="590.5" stroke="#6a6a6a" stroke-width="1"/>
<text x="97.7" y="584.7" font-size="10.6" fill="#555" font-weight="normal" font-family='"Liberation Sans", sans-serif' text-anchor="start" textLength="12.7" lengthAdjust="spacingAndGlyphs">13</text>
<line x1="174.5" y1="574.5" x2="174.5" y2="579.5" stroke="#6a6a6a" stroke-width="1"/>
<line x1="174.5" y1="590.5" x2="174.5" y2="590.5" stroke="#6a6a6a" stroke-width="1"/>
<text x="176.7" y="584.7" font-size="10.6" fill="#555" font-weight="normal" font-family='"Liberation Sans", sans-serif' text-anchor="start" textLength="12.7" lengthAdjust="spacingAndGlyphs">26</text>
<line x1="261.5" y1="574.5" x2="261.5" y2="579.5" stroke="#6a6a6a" stroke-width="1"/>
<line x1="261.5" y1="590.5" x2="261.5" y2="590.5" stroke="#6a6a6a" stroke-width="1"/>
<text x="263.7" y="584.7" font-size="10.6" fill="#555" font-weight="normal" font-family='"Liberation Sans", sans-serif' text-anchor="start" textLength="6.35" lengthAdjust="spacingAndGlyphs">9</text>
<line x1="348.5" y1="574.5" x2="348.5" y2="579.5" stroke="#6a6a6a" stroke-width="1"/>
<line x1="348.5" y1="590.5" x2="348.5" y2="590.5" stroke="#6a6a6a" stroke-width="1"/>
<text x="350.7" y="584.7" font-size="10.6" fill="#555" font-weight="normal" font-family='"Liberation Sans", sans-serif' text-anchor="start" textLength="12.7" lengthAdjust="spacingAndGlyphs">23</text>
<line x1="435.5" y1="574.5" x2="435.5" y2="579.5" stroke="#6a6a6a" stroke-width="1"/>
<line x1="435.5" y1="590.5" x2="435.5" y2="590.5" stroke="#6a6a6a" stroke-width="1"/>
<text x="437.7" y="584.7" font-size="10.6" fill="#555" font-weight="normal" font-family='"Liberation Sans", sans-serif' text-anchor="start" textLength="6.35" lengthAdjust="spacingAndGlyphs">7</text>
<line x1="522.5" y1="574.5" x2="522.5" y2="579.5" stroke="#6a6a6a" stroke-width="1"/>
<line x1="522.5" y1="590.5" x2="522.5" y2="590.5" stroke="#6a6a6a" stroke-width="1"/>
<text x="524.7" y="584.7" font-size="10.6" fill="#555" font-weight="normal" font-family='"Liberation Sans", sans-serif' text-anchor="start" textLength="12.7" lengthAdjust="spacingAndGlyphs">21</text>
<line x1="601.5" y1="574.5" x2="601.5" y2="579.5" stroke="#6a6a6a" stroke-width="1"/>
<line x1="601.5" y1="590.5" x2="601.5" y2="590.5" stroke="#6a6a6a" stroke-width="1"/>
<text x="603.7" y="584.7" font-size="10.6" fill="#555" font-weight="normal" font-family='"Liberation Sans", sans-serif' text-anchor="start" textLength="6.35" lengthAdjust="spacingAndGlyphs">4</text>
<line x1="688.5" y1="574.5" x2="688.5" y2="579.5" stroke="#6a6a6a" stroke-width="1"/>
<line x1="688.5" y1="590.5" x2="688.5" y2="590.5" stroke="#6a6a6a" stroke-width="1"/>
<text x="690.7" y="584.7" font-size="10.6" fill="#555" font-weight="normal" font-family='"Liberation Sans", sans-serif' text-anchor="start" textLength="12.7" lengthAdjust="spacingAndGlyphs">18</text>
<line x1="775.5" y1="574.5" x2="775.5" y2="579.5" stroke="#6a6a6a" stroke-width="1"/>
<line x1="775.5" y1="590.5" x2="775.5" y2="590.5" stroke="#6a6a6a" stroke-width="1"/>
<text x="777.7" y="584.7" font-size="10.6" fill="#555" font-weight="normal" font-family='"Liberation Sans", sans-serif' text-anchor="start" textLength="6.35" lengthAdjust="spacingAndGlyphs">2</text>
<line x1="845.5" y1="574.5" x2="845.5" y2="579.5" stroke="#6a6a6a" stroke-width="1"/>
<line x1="845.5" y1="590.5" x2="845.5" y2="590.5" stroke="#6a6a6a" stroke-width="1"/>
<text x="847.7" y="584.7" font-size="10.6" fill="#555" font-weight="normal" font-family='"Liberation Sans", sans-serif' text-anchor="start" textLength="12.7" lengthAdjust="spacingAndGlyphs">16</text>
<text x="45.7" y="601" font-size="11" fill="#555" font-weight="normal" font-family='"Liberation Sans", sans-serif' text-anchor="start" textLength="37.8" lengthAdjust="spacingAndGlyphs">August</text>
<line x1="217.5" y1="590.5" x2="217.5" y2="594.5" stroke="#6a6a6a" stroke-width="1"/>
<text x="223.7" y="601" font-size="11" fill="#555" font-weight="normal" font-family='"Liberation Sans", sans-serif' text-anchor="start" textLength="61.2" lengthAdjust="spacingAndGlyphs">September</text>
<line x1="400.5" y1="590.5" x2="400.5" y2="594.5" stroke="#6a6a6a" stroke-width="1"/>
<text x="406.7" y="601" font-size="11" fill="#555" font-weight="normal" font-family='"Liberation Sans", sans-serif' text-anchor="start" textLength="45.5" lengthAdjust="spacingAndGlyphs">October</text>
<line x1="592.5" y1="590.5" x2="592.5" y2="594.5" stroke="#6a6a6a" stroke-width="1"/>
<text x="598.7" y="601" font-size="11" fill="#555" font-weight="normal" font-family='"Liberation Sans", sans-serif' text-anchor="start" textLength="56.9" lengthAdjust="spacingAndGlyphs">November</text>
<line x1="775.5" y1="590.5" x2="775.5" y2="594.5" stroke="#6a6a6a" stroke-width="1"/>
<text x="781.7" y="601" font-size="11" fill="#555" font-weight="normal" font-family='"Liberation Sans", sans-serif' text-anchor="start" textLength="56.9" lengthAdjust="spacingAndGlyphs">December</text>
<line x1="8.5" y1="741.5" x2="8.5" y2="746.5" stroke="#6a6a6a" stroke-width="1"/>
<line x1="8.5" y1="757.5" x2="8.5" y2="757.5" stroke="#6a6a6a" stroke-width="1"/>
<text x="10.7" y="751.7" font-size="10.6" fill="#555" font-weight="normal" font-family='"Liberation Sans", sans-serif' text-anchor="start" textLength="12.7" lengthAdjust="spacingAndGlyphs">29</text>
<line x1="95.5" y1="741.5" x2="95.5" y2="746.5" stroke="#6a6a6a" stroke-width="1"/>
<line x1="95.5" y1="757.5" x2="95.5" y2="757.5" stroke="#6a6a6a" stroke-width="1"/>
<text x="97.7" y="751.7" font-size="10.6" fill="#555" font-weight="normal" font-family='"Liberation Sans", sans-serif' text-anchor="start" textLength="12.7" lengthAdjust="spacingAndGlyphs">13</text>
<line x1="174.5" y1="741.5" x2="174.5" y2="746.5" stroke="#6a6a6a" stroke-width="1"/>
<line x1="174.5" y1="757.5" x2="174.5" y2="757.5" stroke="#6a6a6a" stroke-width="1"/>
<text x="176.7" y="751.7" font-size="10.6" fill="#555" font-weight="normal" font-family='"Liberation Sans", sans-serif' text-anchor="start" textLength="12.7" lengthAdjust="spacingAndGlyphs">26</text>
<line x1="261.5" y1="741.5" x2="261.5" y2="746.5" stroke="#6a6a6a" stroke-width="1"/>
<line x1="261.5" y1="757.5" x2="261.5" y2="757.5" stroke="#6a6a6a" stroke-width="1"/>
<text x="263.7" y="751.7" font-size="10.6" fill="#555" font-weight="normal" font-family='"Liberation Sans", sans-serif' text-anchor="start" textLength="6.35" lengthAdjust="spacingAndGlyphs">9</text>
<line x1="348.5" y1="741.5" x2="348.5" y2="746.5" stroke="#6a6a6a" stroke-width="1"/>
<line x1="348.5" y1="757.5" x2="348.5" y2="757.5" stroke="#6a6a6a" stroke-width="1"/>
<text x="350.7" y="751.7" font-size="10.6" fill="#555" font-weight="normal" font-family='"Liberation Sans", sans-serif' text-anchor="start" textLength="12.7" lengthAdjust="spacingAndGlyphs">23</text>
<line x1="435.5" y1="741.5" x2="435.5" y2="746.5" stroke="#6a6a6a" stroke-width="1"/>
<line x1="435.5" y1="757.5" x2="435.5" y2="757.5" stroke="#6a6a6a" stroke-width="1"/>
<text x="437.7" y="751.7" font-size="10.6" fill="#555" font-weight="normal" font-family='"Liberation Sans", sans-serif' text-anchor="start" textLength="6.35" lengthAdjust="spacingAndGlyphs">7</text>
<line x1="522.5" y1="741.5" x2="522.5" y2="746.5" stroke="#6a6a6a" stroke-width="1"/>
<line x1="522.5" y1="757.5" x2="522.5" y2="757.5" stroke="#6a6a6a" stroke-width="1"/>
<text x="524.7" y="751.7" font-size="10.6" fill="#555" font-weight="normal" font-family='"Liberation Sans", sans-serif' text-anchor="start" textLength="12.7" lengthAdjust="spacingAndGlyphs">21</text>
<line x1="601.5" y1="741.5" x2="601.5" y2="746.5" stroke="#6a6a6a" stroke-width="1"/>
<line x1="601.5" y1="757.5" x2="601.5" y2="757.5" stroke="#6a6a6a" stroke-width="1"/>
<text x="603.7" y="751.7" font-size="10.6" fill="#555" font-weight="normal" font-family='"Liberation Sans", sans-serif' text-anchor="start" textLength="6.35" lengthAdjust="spacingAndGlyphs">4</text>
<line x1="688.5" y1="741.5" x2="688.5" y2="746.5" stroke="#6a6a6a" stroke-width="1"/>
<line x1="688.5" y1="757.5" x2="688.5" y2="757.5" stroke="#6a6a6a" stroke-width="1"/>
<text x="690.7" y="751.7" font-size="10.6" fill="#555" font-weight="normal" font-family='"Liberation Sans", sans-serif' text-anchor="start" textLength="12.7" lengthAdjust="spacingAndGlyphs">18</text>
<line x1="775.5" y1="741.5" x2="775.5" y2="746.5" stroke="#6a6a6a" stroke-width="1"/>
<line x1="775.5" y1="757.5" x2="775.5" y2="757.5" stroke="#6a6a6a" stroke-width="1"/>
<text x="777.7" y="751.7" font-size="10.6" fill="#555" font-weight="normal" font-family='"Liberation Sans", sans-serif' text-anchor="start" textLength="6.35" lengthAdjust="spacingAndGlyphs">2</text>
<line x1="845.5" y1="741.5" x2="845.5" y2="746.5" stroke="#6a6a6a" stroke-width="1"/>
<line x1="845.5" y1="757.5" x2="845.5" y2="757.5" stroke="#6a6a6a" stroke-width="1"/>
<text x="847.7" y="751.7" font-size="10.6" fill="#555" font-weight="normal" font-family='"Liberation Sans", sans-serif' text-anchor="start" textLength="12.7" lengthAdjust="spacingAndGlyphs">16</text>
<line x1="8.5" y1="757.5" x2="8.5" y2="761.5" stroke="#6a6a6a" stroke-width="1"/>
<line x1="34.5" y1="757.5" x2="34.5" y2="761.5" stroke="#6a6a6a" stroke-width="1"/>
<text x="40.7" y="768.3" font-size="11" fill="#555" font-weight="normal" font-family='"Liberation Sans", sans-serif' text-anchor="start" textLength="37.8" lengthAdjust="spacingAndGlyphs">August</text>
<line x1="217.5" y1="757.5" x2="217.5" y2="761.5" stroke="#6a6a6a" stroke-width="1"/>
<text x="223.7" y="768.3" font-size="11" fill="#555" font-weight="normal" font-family='"Liberation Sans", sans-serif' text-anchor="start" textLength="61.2" lengthAdjust="spacingAndGlyphs">September</text>
<line x1="400.5" y1="757.5" x2="400.5" y2="761.5" stroke="#6a6a6a" stroke-width="1"/>
<text x="406.7" y="768.3" font-size="11" fill="#555" font-weight="normal" font-family='"Liberation Sans", sans-serif' text-anchor="start" textLength="45.5" lengthAdjust="spacingAndGlyphs">October</text>
<line x1="592.5" y1="757.5" x2="592.5" y2="761.5" stroke="#6a6a6a" stroke-width="1"/>
<text x="598.7" y="768.3" font-size="11" fill="#555" font-weight="normal" font-family='"Liberation Sans", sans-serif' text-anchor="start" textLength="56.9" lengthAdjust="spacingAndGlyphs">November</text>
<line x1="775.5" y1="757.5" x2="775.5" y2="761.5" stroke="#6a6a6a" stroke-width="1"/>
<text x="781.7" y="768.3" font-size="11" fill="#555" font-weight="normal" font-family='"Liberation Sans", sans-serif' text-anchor="start" textLength="56.9" lengthAdjust="spacingAndGlyphs">December</text>
<line x1="8.5" y1="906.5" x2="8.5" y2="911.5" stroke="#6a6a6a" stroke-width="1"/>
<line x1="8.5" y1="922.5" x2="8.5" y2="922.5" stroke="#6a6a6a" stroke-width="1"/>
<text x="10.7" y="916.8" font-size="10.6" fill="#555" font-weight="normal" font-family='"Liberation Sans", sans-serif' text-anchor="start" textLength="12.7" lengthAdjust="spacingAndGlyphs">29</text>
<line x1="95.5" y1="906.5" x2="95.5" y2="911.5" stroke="#6a6a6a" stroke-width="1"/>
<line x1="95.5" y1="922.5" x2="95.5" y2="922.5" stroke="#6a6a6a" stroke-width="1"/>
<text x="97.7" y="916.8" font-size="10.6" fill="#555" font-weight="normal" font-family='"Liberation Sans", sans-serif' text-anchor="start" textLength="12.7" lengthAdjust="spacingAndGlyphs">13</text>
<line x1="174.5" y1="906.5" x2="174.5" y2="911.5" stroke="#6a6a6a" stroke-width="1"/>
<line x1="174.5" y1="922.5" x2="174.5" y2="922.5" stroke="#6a6a6a" stroke-width="1"/>
<text x="176.7" y="916.8" font-size="10.6" fill="#555" font-weight="normal" font-family='"Liberation Sans", sans-serif' text-anchor="start" textLength="12.7" lengthAdjust="spacingAndGlyphs">26</text>
<line x1="261.5" y1="906.5" x2="261.5" y2="911.5" stroke="#6a6a6a" stroke-width="1"/>
<line x1="261.5" y1="922.5" x2="261.5" y2="922.5" stroke="#6a6a6a" stroke-width="1"/>
<text x="263.7" y="916.8" font-size="10.6" fill="#555" font-weight="normal" font-family='"Liberation Sans", sans-serif' text-anchor="start" textLength="6.35" lengthAdjust="spacingAndGlyphs">9</text>
<line x1="348.5" y1="906.5" x2="348.5" y2="911.5" stroke="#6a6a6a" stroke-width="1"/>
<line x1="348.5" y1="922.5" x2="348.5" y2="922.5" stroke="#6a6a6a" stroke-width="1"/>
<text x="350.7" y="916.8" font-size="10.6" fill="#555" font-weight="normal" font-family='"Liberation Sans", sans-serif' text-anchor="start" textLength="12.7" lengthAdjust="spacingAndGlyphs">23</text>
<line x1="435.5" y1="906.5" x2="435.5" y2="911.5" stroke="#6a6a6a" stroke-width="1"/>
<line x1="435.5" y1="922.5" x2="435.5" y2="922.5" stroke="#6a6a6a" stroke-width="1"/>
<text x="437.7" y="916.8" font-size="10.6" fill="#555" font-weight="normal" font-family='"Liberation Sans", sans-serif' text-anchor="start" textLength="6.35" lengthAdjust="spacingAndGlyphs">7</text>
<line x1="522.5" y1="906.5" x2="522.5" y2="911.5" stroke="#6a6a6a" stroke-width="1"/>
<line x1="522.5" y1="922.5" x2="522.5" y2="922.5" stroke="#6a6a6a" stroke-width="1"/>
<text x="524.7" y="916.8" font-size="10.6" fill="#555" font-weight="normal" font-family='"Liberation Sans", sans-serif' text-anchor="start" textLength="12.7" lengthAdjust="spacingAndGlyphs">21</text>
<line x1="601.5" y1="906.5" x2="601.5" y2="911.5" stroke="#6a6a6a" stroke-width="1"/>
<line x1="601.5" y1="922.5" x2="601.5" y2="922.5" stroke="#6a6a6a" stroke-width="1"/>
<text x="603.7" y="916.8" font-size="10.6" fill="#555" font-weight="normal" font-family='"Liberation Sans", sans-serif' text-anchor="start" textLength="6.35" lengthAdjust="spacingAndGlyphs">4</text>
<line x1="688.5" y1="906.5" x2="688.5" y2="911.5" stroke="#6a6a6a" stroke-width="1"/>
<line x1="688.5" y1="922.5" x2="688.5" y2="922.5" stroke="#6a6a6a" stroke-width="1"/>
<text x="690.7" y="916.8" font-size="10.6" fill="#555" font-weight="normal" font-family='"Liberation Sans", sans-serif' text-anchor="start" textLength="12.7" lengthAdjust="spacingAndGlyphs">18</text>
<line x1="775.5" y1="906.5" x2="775.5" y2="911.5" stroke="#6a6a6a" stroke-width="1"/>
<line x1="775.5" y1="922.5" x2="775.5" y2="922.5" stroke="#6a6a6a" stroke-width="1"/>
<text x="777.7" y="916.8" font-size="10.6" fill="#555" font-weight="normal" font-family='"Liberation Sans", sans-serif' text-anchor="start" textLength="6.35" lengthAdjust="spacingAndGlyphs">2</text>
<line x1="845.5" y1="906.5" x2="845.5" y2="911.5" stroke="#6a6a6a" stroke-width="1"/>
<line x1="845.5" y1="922.5" x2="845.5" y2="922.5" stroke="#6a6a6a" stroke-width="1"/>
<text x="847.7" y="916.8" font-size="10.6" fill="#555" font-weight="normal" font-family='"Liberation Sans", sans-serif' text-anchor="start" textLength="12.7" lengthAdjust="spacingAndGlyphs">16</text>
<line x1="8.5" y1="922.5" x2="8.5" y2="926.5" stroke="#6a6a6a" stroke-width="1"/>
<line x1="34.5" y1="922.5" x2="34.5" y2="926.5" stroke="#6a6a6a" stroke-width="1"/>
<text x="40.7" y="933.1" font-size="11" fill="#555" font-weight="normal" font-family='"Liberation Sans", sans-serif' text-anchor="start" textLength="37.8" lengthAdjust="spacingAndGlyphs">August</text>
<line x1="217.5" y1="922.5" x2="217.5" y2="926.5" stroke="#6a6a6a" stroke-width="1"/>
<text x="223.7" y="933.1" font-size="11" fill="#555" font-weight="normal" font-family='"Liberation Sans", sans-serif' text-anchor="start" textLength="61.2" lengthAdjust="spacingAndGlyphs">September</text>
<line x1="400.5" y1="922.5" x2="400.5" y2="926.5" stroke="#6a6a6a" stroke-width="1"/>
<text x="406.7" y="933.1" font-size="11" fill="#555" font-weight="normal" font-family='"Liberation Sans", sans-serif' text-anchor="start" textLength="45.5" lengthAdjust="spacingAndGlyphs">October</text>
<line x1="592.5" y1="922.5" x2="592.5" y2="926.5" stroke="#6a6a6a" stroke-width="1"/>
<text x="598.7" y="933.1" font-size="11" fill="#555" font-weight="normal" font-family='"Liberation Sans", sans-serif' text-anchor="start" textLength="56.9" lengthAdjust="spacingAndGlyphs">November</text>
<line x1="775.5" y1="922.5" x2="775.5" y2="926.5" stroke="#6a6a6a" stroke-width="1"/>
<text x="781.7" y="933.1" font-size="11" fill="#555" font-weight="normal" font-family='"Liberation Sans", sans-serif' text-anchor="start" textLength="56.9" lengthAdjust="spacingAndGlyphs">December</text>
<line x1="35" y1="574.5" x2="39.5" y2="574.5" stroke="#6a6a6a" stroke-width="1"/>
<text x="33.6" y="577.8" font-size="10.4" fill="#555" font-weight="normal" font-family='"Liberation Sans", sans-serif' text-anchor="end" textLength="6.75" lengthAdjust="spacingAndGlyphs">0</text>
<line x1="37" y1="559.5" x2="39.5" y2="559.5" stroke="#6a6a6a" stroke-width="1"/>
<line x1="35" y1="545.5" x2="39.5" y2="545.5" stroke="#6a6a6a" stroke-width="1"/>
<text x="33.6" y="549.22" font-size="10.4" fill="#555" font-weight="normal" font-family='"Liberation Sans", sans-serif' text-anchor="end" textLength="20.25" lengthAdjust="spacingAndGlyphs">500</text>
<line x1="37" y1="531.5" x2="39.5" y2="531.5" stroke="#6a6a6a" stroke-width="1"/>
<line x1="35" y1="516.5" x2="39.5" y2="516.5" stroke="#6a6a6a" stroke-width="1"/>
<text x="33.6" y="520.64" font-size="10.4" fill="#555" font-weight="normal" font-family='"Liberation Sans", sans-serif' text-anchor="end" textLength="27" lengthAdjust="spacingAndGlyphs">1000</text>
<line x1="37" y1="502.5" x2="39.5" y2="502.5" stroke="#6a6a6a" stroke-width="1"/>
<line x1="35" y1="488.5" x2="39.5" y2="488.5" stroke="#6a6a6a" stroke-width="1"/>
<text x="33.6" y="492.06" font-size="10.4" fill="#555" font-weight="normal" font-family='"Liberation Sans", sans-serif' text-anchor="end" textLength="27" lengthAdjust="spacingAndGlyphs">1500</text>
<line x1="37" y1="474.5" x2="39.5" y2="474.5" stroke="#6a6a6a" stroke-width="1"/>
<line x1="35" y1="459.5" x2="39.5" y2="459.5" stroke="#6a6a6a" stroke-width="1"/>
<text x="33.6" y="463.48" font-size="10.4" fill="#555" font-weight="normal" font-family='"Liberation Sans", sans-serif' text-anchor="end" textLength="27" lengthAdjust="spacingAndGlyphs">2000</text>
<line x1="37" y1="445.5" x2="39.5" y2="445.5" stroke="#6a6a6a" stroke-width="1"/>
<line x1="35" y1="431.5" x2="39.5" y2="431.5" stroke="#6a6a6a" stroke-width="1"/>
<text x="33.6" y="434.9" font-size="10.4" fill="#555" font-weight="normal" font-family='"Liberation Sans", sans-serif' text-anchor="end" textLength="27" lengthAdjust="spacingAndGlyphs">2500</text>
<line x1="37" y1="416.5" x2="39.5" y2="416.5" stroke="#6a6a6a" stroke-width="1"/>
<line x1="35" y1="402.5" x2="39.5" y2="402.5" stroke="#6a6a6a" stroke-width="1"/>
<text x="33.6" y="406.32" font-size="10.4" fill="#555" font-weight="normal" font-family='"Liberation Sans", sans-serif' text-anchor="end" textLength="27" lengthAdjust="spacingAndGlyphs">3000</text>
<line x1="37" y1="388.5" x2="39.5" y2="388.5" stroke="#6a6a6a" stroke-width="1"/>
<line x1="35" y1="374.5" x2="39.5" y2="374.5" stroke="#6a6a6a" stroke-width="1"/>
<text x="33.6" y="377.74" font-size="10.4" fill="#555" font-weight="normal" font-family='"Liberation Sans", sans-serif' text-anchor="end" textLength="27" lengthAdjust="spacingAndGlyphs">3500</text>
<line x1="37" y1="359.5" x2="39.5" y2="359.5" stroke="#6a6a6a" stroke-width="1"/>
<line x1="35" y1="345.5" x2="39.5" y2="345.5" stroke="#6a6a6a" stroke-width="1"/>
<text x="33.6" y="349.16" font-size="10.4" fill="#555" font-weight="normal" font-family='"Liberation Sans", sans-serif' text-anchor="end" textLength="27" lengthAdjust="spacingAndGlyphs">4000</text>
<line x1="37" y1="331.5" x2="39.5" y2="331.5" stroke="#6a6a6a" stroke-width="1"/>
<line x1="35" y1="316.5" x2="39.5" y2="316.5" stroke="#6a6a6a" stroke-width="1"/>
<text x="33.6" y="320.58" font-size="10.4" fill="#555" font-weight="normal" font-family='"Liberation Sans", sans-serif' text-anchor="end" textLength="27" lengthAdjust="spacingAndGlyphs">4500</text>
<line x1="37" y1="302.5" x2="39.5" y2="302.5" stroke="#6a6a6a" stroke-width="1"/>
<line x1="35" y1="288.5" x2="39.5" y2="288.5" stroke="#6a6a6a" stroke-width="1"/>
<text x="33.6" y="292" font-size="10.4" fill="#555" font-weight="normal" font-family='"Liberation Sans", sans-serif' text-anchor="end" textLength="27" lengthAdjust="spacingAndGlyphs">5000</text>
<line x1="37" y1="274.5" x2="39.5" y2="274.5" stroke="#6a6a6a" stroke-width="1"/>
<line x1="35" y1="259.5" x2="39.5" y2="259.5" stroke="#6a6a6a" stroke-width="1"/>
<text x="33.6" y="263.42" font-size="10.4" fill="#555" font-weight="normal" font-family='"Liberation Sans", sans-serif' text-anchor="end" textLength="27" lengthAdjust="spacingAndGlyphs">5500</text>
<line x1="37" y1="245.5" x2="39.5" y2="245.5" stroke="#6a6a6a" stroke-width="1"/>
<line x1="35" y1="231.5" x2="39.5" y2="231.5" stroke="#6a6a6a" stroke-width="1"/>
<text x="33.6" y="234.84" font-size="10.4" fill="#555" font-weight="normal" font-family='"Liberation Sans", sans-serif' text-anchor="end" textLength="27" lengthAdjust="spacingAndGlyphs">6000</text>
<line x1="37" y1="216.5" x2="39.5" y2="216.5" stroke="#6a6a6a" stroke-width="1"/>
<line x1="35" y1="202.5" x2="39.5" y2="202.5" stroke="#6a6a6a" stroke-width="1"/>
<text x="33.6" y="206.26" font-size="10.4" fill="#555" font-weight="normal" font-family='"Liberation Sans", sans-serif' text-anchor="end" textLength="27" lengthAdjust="spacingAndGlyphs">6500</text>
<line x1="37" y1="188.5" x2="39.5" y2="188.5" stroke="#6a6a6a" stroke-width="1"/>
<line x1="35" y1="173.5" x2="39.5" y2="173.5" stroke="#6a6a6a" stroke-width="1"/>
<text x="33.6" y="177.68" font-size="10.4" fill="#555" font-weight="normal" font-family='"Liberation Sans", sans-serif' text-anchor="end" textLength="27" lengthAdjust="spacingAndGlyphs">7000</text>
<line x1="37" y1="159.5" x2="39.5" y2="159.5" stroke="#6a6a6a" stroke-width="1"/>
<line x1="35" y1="145.5" x2="39.5" y2="145.5" stroke="#6a6a6a" stroke-width="1"/>
<text x="33.6" y="149.1" font-size="10.4" fill="#555" font-weight="normal" font-family='"Liberation Sans", sans-serif' text-anchor="end" textLength="27" lengthAdjust="spacingAndGlyphs">7500</text>
<line x1="37" y1="131.5" x2="39.5" y2="131.5" stroke="#6a6a6a" stroke-width="1"/>
<line x1="926.5" y1="147.5" x2="932" y2="147.5" stroke="#6a6a6a" stroke-width="1"/>
<text x="933.6" y="151.3" font-size="10.7" fill="#555" font-weight="normal" font-family='"Liberation Sans", sans-serif' text-anchor="start" textLength="44.5" lengthAdjust="spacingAndGlyphs">1500.00</text>
<line x1="926.5" y1="179.5" x2="932" y2="179.5" stroke="#6a6a6a" stroke-width="1"/>
<text x="933.6" y="183.75" font-size="10.7" fill="#555" font-weight="normal" font-family='"Liberation Sans", sans-serif' text-anchor="start" textLength="44.5" lengthAdjust="spacingAndGlyphs">1480.00</text>
<line x1="926.5" y1="212.5" x2="932" y2="212.5" stroke="#6a6a6a" stroke-width="1"/>
<text x="933.6" y="216.2" font-size="10.7" fill="#555" font-weight="normal" font-family='"Liberation Sans", sans-serif' text-anchor="start" textLength="44.5" lengthAdjust="spacingAndGlyphs">1460.00</text>
<line x1="926.5" y1="244.5" x2="932" y2="244.5" stroke="#6a6a6a" stroke-width="1"/>
<text x="933.6" y="248.65" font-size="10.7" fill="#555" font-weight="normal" font-family='"Liberation Sans", sans-serif' text-anchor="start" textLength="44.5" lengthAdjust="spacingAndGlyphs">1440.00</text>
<line x1="926.5" y1="277.5" x2="932" y2="277.5" stroke="#6a6a6a" stroke-width="1"/>
<text x="933.6" y="281.1" font-size="10.7" fill="#555" font-weight="normal" font-family='"Liberation Sans", sans-serif' text-anchor="start" textLength="44.5" lengthAdjust="spacingAndGlyphs">1420.00</text>
<line x1="926.5" y1="309.5" x2="932" y2="309.5" stroke="#6a6a6a" stroke-width="1"/>
<text x="933.6" y="313.55" font-size="10.7" fill="#555" font-weight="normal" font-family='"Liberation Sans", sans-serif' text-anchor="start" textLength="44.5" lengthAdjust="spacingAndGlyphs">1400.00</text>
<line x1="926.5" y1="342.5" x2="932" y2="342.5" stroke="#6a6a6a" stroke-width="1"/>
<text x="933.6" y="346" font-size="10.7" fill="#555" font-weight="normal" font-family='"Liberation Sans", sans-serif' text-anchor="start" textLength="44.5" lengthAdjust="spacingAndGlyphs">1380.00</text>
<line x1="926.5" y1="374.5" x2="932" y2="374.5" stroke="#6a6a6a" stroke-width="1"/>
<text x="933.6" y="378.45" font-size="10.7" fill="#555" font-weight="normal" font-family='"Liberation Sans", sans-serif' text-anchor="start" textLength="44.5" lengthAdjust="spacingAndGlyphs">1360.00</text>
<line x1="926.5" y1="407.5" x2="932" y2="407.5" stroke="#6a6a6a" stroke-width="1"/>
<text x="933.6" y="410.9" font-size="10.7" fill="#555" font-weight="normal" font-family='"Liberation Sans", sans-serif' text-anchor="start" textLength="44.5" lengthAdjust="spacingAndGlyphs">1340.00</text>
<line x1="926.5" y1="439.5" x2="932" y2="439.5" stroke="#6a6a6a" stroke-width="1"/>
<text x="933.6" y="443.35" font-size="10.7" fill="#555" font-weight="normal" font-family='"Liberation Sans", sans-serif' text-anchor="start" textLength="44.5" lengthAdjust="spacingAndGlyphs">1320.00</text>
<line x1="926.5" y1="471.5" x2="932" y2="471.5" stroke="#6a6a6a" stroke-width="1"/>
<text x="933.6" y="475.8" font-size="10.7" fill="#555" font-weight="normal" font-family='"Liberation Sans", sans-serif' text-anchor="start" textLength="44.5" lengthAdjust="spacingAndGlyphs">1300.00</text>
<line x1="926.5" y1="504.5" x2="932" y2="504.5" stroke="#6a6a6a" stroke-width="1"/>
<text x="933.6" y="508.25" font-size="10.7" fill="#555" font-weight="normal" font-family='"Liberation Sans", sans-serif' text-anchor="start" textLength="44.5" lengthAdjust="spacingAndGlyphs">1280.00</text>
<line x1="926.5" y1="536.5" x2="932" y2="536.5" stroke="#6a6a6a" stroke-width="1"/>
<text x="933.6" y="540.7" font-size="10.7" fill="#555" font-weight="normal" font-family='"Liberation Sans", sans-serif' text-anchor="start" textLength="44.5" lengthAdjust="spacingAndGlyphs">1260.00</text>
<line x1="926.5" y1="569.5" x2="932" y2="569.5" stroke="#6a6a6a" stroke-width="1"/>
<text x="933.6" y="573.15" font-size="10.7" fill="#555" font-weight="normal" font-family='"Liberation Sans", sans-serif' text-anchor="start" textLength="44.5" lengthAdjust="spacingAndGlyphs">1240.00</text>
<line x1="926.5" y1="125.5" x2="930" y2="125.5" stroke="#6a6a6a" stroke-width="1"/>
<line x1="926.5" y1="136.5" x2="930" y2="136.5" stroke="#6a6a6a" stroke-width="1"/>
<line x1="926.5" y1="158.5" x2="930" y2="158.5" stroke="#6a6a6a" stroke-width="1"/>
<line x1="926.5" y1="169.5" x2="930" y2="169.5" stroke="#6a6a6a" stroke-width="1"/>
<line x1="926.5" y1="190.5" x2="930" y2="190.5" stroke="#6a6a6a" stroke-width="1"/>
<line x1="926.5" y1="201.5" x2="930" y2="201.5" stroke="#6a6a6a" stroke-width="1"/>
<line x1="926.5" y1="223.5" x2="930" y2="223.5" stroke="#6a6a6a" stroke-width="1"/>
<line x1="926.5" y1="233.5" x2="930" y2="233.5" stroke="#6a6a6a" stroke-width="1"/>
<line x1="926.5" y1="255.5" x2="930" y2="255.5" stroke="#6a6a6a" stroke-width="1"/>
<line x1="926.5" y1="266.5" x2="930" y2="266.5" stroke="#6a6a6a" stroke-width="1"/>
<line x1="926.5" y1="288.5" x2="930" y2="288.5" stroke="#6a6a6a" stroke-width="1"/>
<line x1="926.5" y1="298.5" x2="930" y2="298.5" stroke="#6a6a6a" stroke-width="1"/>
<line x1="926.5" y1="320.5" x2="930" y2="320.5" stroke="#6a6a6a" stroke-width="1"/>
<line x1="926.5" y1="331.5" x2="930" y2="331.5" stroke="#6a6a6a" stroke-width="1"/>
<line x1="926.5" y1="352.5" x2="930" y2="352.5" stroke="#6a6a6a" stroke-width="1"/>
<line x1="926.5" y1="363.5" x2="930" y2="363.5" stroke="#6a6a6a" stroke-width="1"/>
<line x1="926.5" y1="385.5" x2="930" y2="385.5" stroke="#6a6a6a" stroke-width="1"/>
<line x1="926.5" y1="396.5" x2="930" y2="396.5" stroke="#6a6a6a" stroke-width="1"/>
<line x1="926.5" y1="417.5" x2="930" y2="417.5" stroke="#6a6a6a" stroke-width="1"/>
<line x1="926.5" y1="428.5" x2="930" y2="428.5" stroke="#6a6a6a" stroke-width="1"/>
<line x1="926.5" y1="450.5" x2="930" y2="450.5" stroke="#6a6a6a" stroke-width="1"/>
<line x1="926.5" y1="461.5" x2="930" y2="461.5" stroke="#6a6a6a" stroke-width="1"/>
<line x1="926.5" y1="482.5" x2="930" y2="482.5" stroke="#6a6a6a" stroke-width="1"/>
<line x1="926.5" y1="493.5" x2="930" y2="493.5" stroke="#6a6a6a" stroke-width="1"/>
<line x1="926.5" y1="515.5" x2="930" y2="515.5" stroke="#6a6a6a" stroke-width="1"/>
<line x1="926.5" y1="525.5" x2="930" y2="525.5" stroke="#6a6a6a" stroke-width="1"/>
<line x1="926.5" y1="547.5" x2="930" y2="547.5" stroke="#6a6a6a" stroke-width="1"/>
<line x1="926.5" y1="558.5" x2="930" y2="558.5" stroke="#6a6a6a" stroke-width="1"/>
<line x1="926.5" y1="580.5" x2="930" y2="580.5" stroke="#6a6a6a" stroke-width="1"/>
<line x1="926.5" y1="590.5" x2="930" y2="590.5" stroke="#6a6a6a" stroke-width="1"/>
<line x1="926.5" y1="647.5" x2="932" y2="647.5" stroke="#6a6a6a" stroke-width="1"/>
<text x="933.7" y="651.3" font-size="10.7" fill="#555" font-weight="normal" font-family='"Liberation Sans", sans-serif' text-anchor="start" textLength="29.2" lengthAdjust="spacingAndGlyphs">20.00</text>
<line x1="926.5" y1="677.5" x2="932" y2="677.5" stroke="#6a6a6a" stroke-width="1"/>
<text x="933.7" y="681.1" font-size="10.7" fill="#555" font-weight="normal" font-family='"Liberation Sans", sans-serif' text-anchor="start" textLength="22.84" lengthAdjust="spacingAndGlyphs">0.00</text>
<line x1="926.5" y1="706.5" x2="932" y2="706.5" stroke="#6a6a6a" stroke-width="1"/>
<text x="933.7" y="710.9" font-size="10.7" fill="#555" font-weight="normal" font-family='"Liberation Sans", sans-serif' text-anchor="start" textLength="35.56" lengthAdjust="spacingAndGlyphs">-20.00</text>
<line x1="926.5" y1="736.5" x2="932" y2="736.5" stroke="#6a6a6a" stroke-width="1"/>
<text x="933.7" y="740.7" font-size="10.7" fill="#555" font-weight="normal" font-family='"Liberation Sans", sans-serif' text-anchor="start" textLength="35.56" lengthAdjust="spacingAndGlyphs">-40.00</text>
<line x1="926.5" y1="632.5" x2="930" y2="632.5" stroke="#6a6a6a" stroke-width="1"/>
<line x1="926.5" y1="662.5" x2="930" y2="662.5" stroke="#6a6a6a" stroke-width="1"/>
<line x1="926.5" y1="692.5" x2="930" y2="692.5" stroke="#6a6a6a" stroke-width="1"/>
<line x1="926.5" y1="721.5" x2="930" y2="721.5" stroke="#6a6a6a" stroke-width="1"/>
<line x1="926.5" y1="751.5" x2="930" y2="751.5" stroke="#6a6a6a" stroke-width="1"/>
<line x1="926.5" y1="787.5" x2="932" y2="787.5" stroke="#6a6a6a" stroke-width="1"/>
<text x="933.7" y="791.4" font-size="10.7" fill="#555" font-weight="normal" font-family='"Liberation Sans", sans-serif' text-anchor="start" textLength="30.3" lengthAdjust="spacingAndGlyphs">70.00</text>
<line x1="926.5" y1="812.5" x2="932" y2="812.5" stroke="#6a6a6a" stroke-width="1"/>
<text x="933.7" y="816.1" font-size="10.7" fill="#555" font-weight="normal" font-family='"Liberation Sans", sans-serif' text-anchor="start" textLength="30.3" lengthAdjust="spacingAndGlyphs">60.00</text>
<line x1="926.5" y1="836.5" x2="932" y2="836.5" stroke="#6a6a6a" stroke-width="1"/>
<text x="933.7" y="840.8" font-size="10.7" fill="#555" font-weight="normal" font-family='"Liberation Sans", sans-serif' text-anchor="start" textLength="30.3" lengthAdjust="spacingAndGlyphs">50.00</text>
<line x1="926.5" y1="861.5" x2="932" y2="861.5" stroke="#6a6a6a" stroke-width="1"/>
<text x="933.7" y="865.5" font-size="10.7" fill="#555" font-weight="normal" font-family='"Liberation Sans", sans-serif' text-anchor="start" textLength="30.3" lengthAdjust="spacingAndGlyphs">40.00</text>
<line x1="926.5" y1="886.5" x2="932" y2="886.5" stroke="#6a6a6a" stroke-width="1"/>
<text x="933.7" y="890.2" font-size="10.7" fill="#555" font-weight="normal" font-family='"Liberation Sans", sans-serif' text-anchor="start" textLength="30.3" lengthAdjust="spacingAndGlyphs">30.00</text>
<line x1="926.5" y1="775.5" x2="930" y2="775.5" stroke="#6a6a6a" stroke-width="1"/>
<line x1="926.5" y1="799.5" x2="930" y2="799.5" stroke="#6a6a6a" stroke-width="1"/>
<line x1="926.5" y1="824.5" x2="930" y2="824.5" stroke="#6a6a6a" stroke-width="1"/>
<line x1="926.5" y1="849.5" x2="930" y2="849.5" stroke="#6a6a6a" stroke-width="1"/>
<line x1="926.5" y1="873.5" x2="930" y2="873.5" stroke="#6a6a6a" stroke-width="1"/>
<line x1="926.5" y1="898.5" x2="930" y2="898.5" stroke="#6a6a6a" stroke-width="1"/>
<line x1="926.5" y1="923.5" x2="930" y2="923.5" stroke="#6a6a6a" stroke-width="1"/>
<rect x="926.5" y="338" width="53.5" height="13.5" fill="#087208" stroke="#0b5d0b" stroke-width="1"/>
<text x="932" y="348.3" font-size="11" fill="#fff" font-weight="normal" font-family='"Liberation Sans", sans-serif' text-anchor="start" textLength="43.5" lengthAdjust="spacingAndGlyphs">1378.26</text>
<rect x="926.5" y="408.5" width="53.5" height="13.5" fill="#ff0000" stroke="#0b5d0b" stroke-width="1"/>
<text x="932" y="418.8" font-size="11" fill="#fff" font-weight="normal" font-family='"Liberation Sans", sans-serif' text-anchor="start" textLength="43.5" lengthAdjust="spacingAndGlyphs">1334.88</text>
<rect x="926.5" y="451.5" width="53.5" height="13.5" fill="#2d90ea" stroke="#0b5d0b" stroke-width="1"/>
<text x="932" y="461.8" font-size="11" fill="#fff" font-weight="normal" font-family='"Liberation Sans", sans-serif' text-anchor="start" textLength="43.5" lengthAdjust="spacingAndGlyphs">1308.46</text>
<rect x="10.5" y="544.5" width="28.5" height="14" fill="#ec148c" stroke="#0b5d0b" stroke-width="1"/>
<text x="15.5" y="555.3" font-size="11" fill="#fff" font-weight="normal" font-family='"Liberation Sans", sans-serif' text-anchor="start" textLength="19.5" lengthAdjust="spacingAndGlyphs">409</text>
<rect x="6.5" y="582.5" width="30.5" height="12.5" fill="#dcdcdc" stroke="#222" stroke-width="1"/>
<text x="9" y="592.9" font-size="10" fill="#555" font-weight="normal" font-family='"Liberation Sans", sans-serif' text-anchor="start" textLength="26" lengthAdjust="spacingAndGlyphs">x10K</text>
<rect x="926.5" y="663.5" width="38" height="14" fill="#087208" stroke="#0b5d0b" stroke-width="1"/>
<text x="932" y="674.3" font-size="11" fill="#fff" font-weight="normal" font-family='"Liberation Sans", sans-serif' text-anchor="start" textLength="30" lengthAdjust="spacingAndGlyphs">-3.27</text>
<rect x="926.5" y="684.5" width="45" height="14" fill="#ff0000" stroke="#0b5d0b" stroke-width="1"/>
<text x="932" y="695.3" font-size="11" fill="#fff" font-weight="normal" font-family='"Liberation Sans", sans-serif' text-anchor="start" textLength="37" lengthAdjust="spacingAndGlyphs">-17.70</text>
<rect x="926.5" y="698.5" width="45" height="14" fill="#2d90ea" stroke="#0b5d0b" stroke-width="1"/>
<text x="932" y="709.3" font-size="11" fill="#fff" font-weight="normal" font-family='"Liberation Sans", sans-serif' text-anchor="start" textLength="37" lengthAdjust="spacingAndGlyphs">-19.34</text>
<rect x="926.5" y="874.5" width="39.5" height="14" fill="#2d90ea" stroke="#0b5d0b" stroke-width="1"/>
<text x="932" y="885.3" font-size="11" fill="#fff" font-weight="normal" font-family='"Liberation Sans", sans-serif' text-anchor="start" textLength="30" lengthAdjust="spacingAndGlyphs">31.86</text>
<text x="45.6" y="114.2" font-size="10" fill="#33cc33" font-weight="normal" font-family='"Liberation Sans", sans-serif' text-anchor="start" textLength="19" lengthAdjust="spacingAndGlyphs">SET</text>
<text x="70.4" y="114.2" font-size="10" fill="#ff0000" font-weight="normal" font-family='"Liberation Sans", sans-serif' text-anchor="start" textLength="90.3" lengthAdjust="spacingAndGlyphs">EMA(10) 1334.88</text>
<text x="165.9" y="114.2" font-size="10" fill="#0a7a0a" font-weight="normal" font-family='"Liberation Sans", sans-serif' text-anchor="start" textLength="89.1" lengthAdjust="spacingAndGlyphs">EMA(50) 1378.26</text>
<text x="261.3" y="114.2" font-size="10" fill="#ff99cc" font-weight="normal" font-family='"Liberation Sans", sans-serif' text-anchor="start" textLength="45.5" lengthAdjust="spacingAndGlyphs">V:409.22</text>
<text x="9.3" y="615.6" font-size="10" fill="#2a6db5" font-weight="normal" font-family='"Liberation Sans", sans-serif' text-anchor="start" textLength="77.7" lengthAdjust="spacingAndGlyphs">MACD(12,26,9)</text>
<text x="91.3" y="615.6" font-size="10" fill="#3d9af0" font-weight="normal" font-family='"Liberation Sans", sans-serif' text-anchor="start" textLength="60.9" lengthAdjust="spacingAndGlyphs">DIFF:-19.34</text>
<text x="156.9" y="615.6" font-size="10" fill="#ff0000" font-weight="normal" font-family='"Liberation Sans", sans-serif' text-anchor="start" textLength="57.5" lengthAdjust="spacingAndGlyphs">DEA:-17.70</text>
<text x="220.1" y="615.6" font-size="10" fill="#0a7a0a" font-weight="normal" font-family='"Liberation Sans", sans-serif' text-anchor="start" textLength="61.6" lengthAdjust="spacingAndGlyphs">MACD:-3.27</text>
<text x="9.3" y="782.4" font-size="10" fill="#1a5fa8" font-weight="normal" font-family='"Liberation Sans", sans-serif' text-anchor="start" textLength="40.6" lengthAdjust="spacingAndGlyphs">RSI(14)</text>
<text x="54.5" y="782.4" font-size="10" fill="#3d9af0" font-weight="normal" font-family='"Liberation Sans", sans-serif' text-anchor="start" textLength="51.8" lengthAdjust="spacingAndGlyphs">RSI:31.86</text>
<line x1="217.96" y1="433.5" x2="983.5" y2="433.5" stroke="#000" stroke-width="1" shape-rendering="crispEdges"/>
<line x1="235.38" y1="466.2" x2="991" y2="466.2" stroke="#000" stroke-width="1" shape-rendering="crispEdges"/>
<line x1="514.04" y1="171.5" x2="991" y2="441.1" stroke="#000" stroke-width="1" shape-rendering="crispEdges"/>
<line x1="688.21" y1="271" x2="991" y2="476.8" stroke="#000" stroke-width="1" shape-rendering="crispEdges"/>
<line x1="601.12" y1="329.3" x2="991" y2="498.7" stroke="#000" stroke-width="1" shape-rendering="crispEdges"/>
<line x1="635.96" y1="301.1" x2="971" y2="502.6" stroke="#000" stroke-width="1" shape-rendering="crispEdges"/>
<polygon points="911.9,452.1 916.2,462.6 928.7,462.6 920.1,469.6 922.5,477.5 911.9,473.5 901.2,477.5 905,469.6 895.4,462.6 908.2,462.6" fill="none" stroke="#000" stroke-width="1" shape-rendering="crispEdges"/>
<line x1="582.7" y1="836.3" x2="991" y2="836.3" stroke="#000" stroke-width="1" shape-rendering="crispEdges"/>
<line x1="688.21" y1="838.2" x2="991" y2="864.9" stroke="#000" stroke-width="1" shape-rendering="crispEdges"/>
<line x1="784" y1="846.7" x2="991" y2="878.7" stroke="#000" stroke-width="1" shape-rendering="crispEdges"/>
<line x1="731.75" y1="879" x2="991" y2="882.8" stroke="#000" stroke-width="1" shape-rendering="crispEdges"/>
<text x="5.8" y="947.8" font-size="10.8" fill="#555" font-weight="normal" font-family='"Liberation Sans", sans-serif' text-anchor="start" textLength="444.7" lengthAdjust="spacingAndGlyphs">Copyright © 2006 - 2013 ProgramInvestor powered by Investor.co.th -(31ms)-</text>
<text x="868.4" y="947.9" font-size="10.8" fill="#555" font-weight="normal" font-family='"Liberation Sans", sans-serif' text-anchor="start" textLength="113.9" lengthAdjust="spacingAndGlyphs">http://investor.co.th</text>
</svg></body></html>
